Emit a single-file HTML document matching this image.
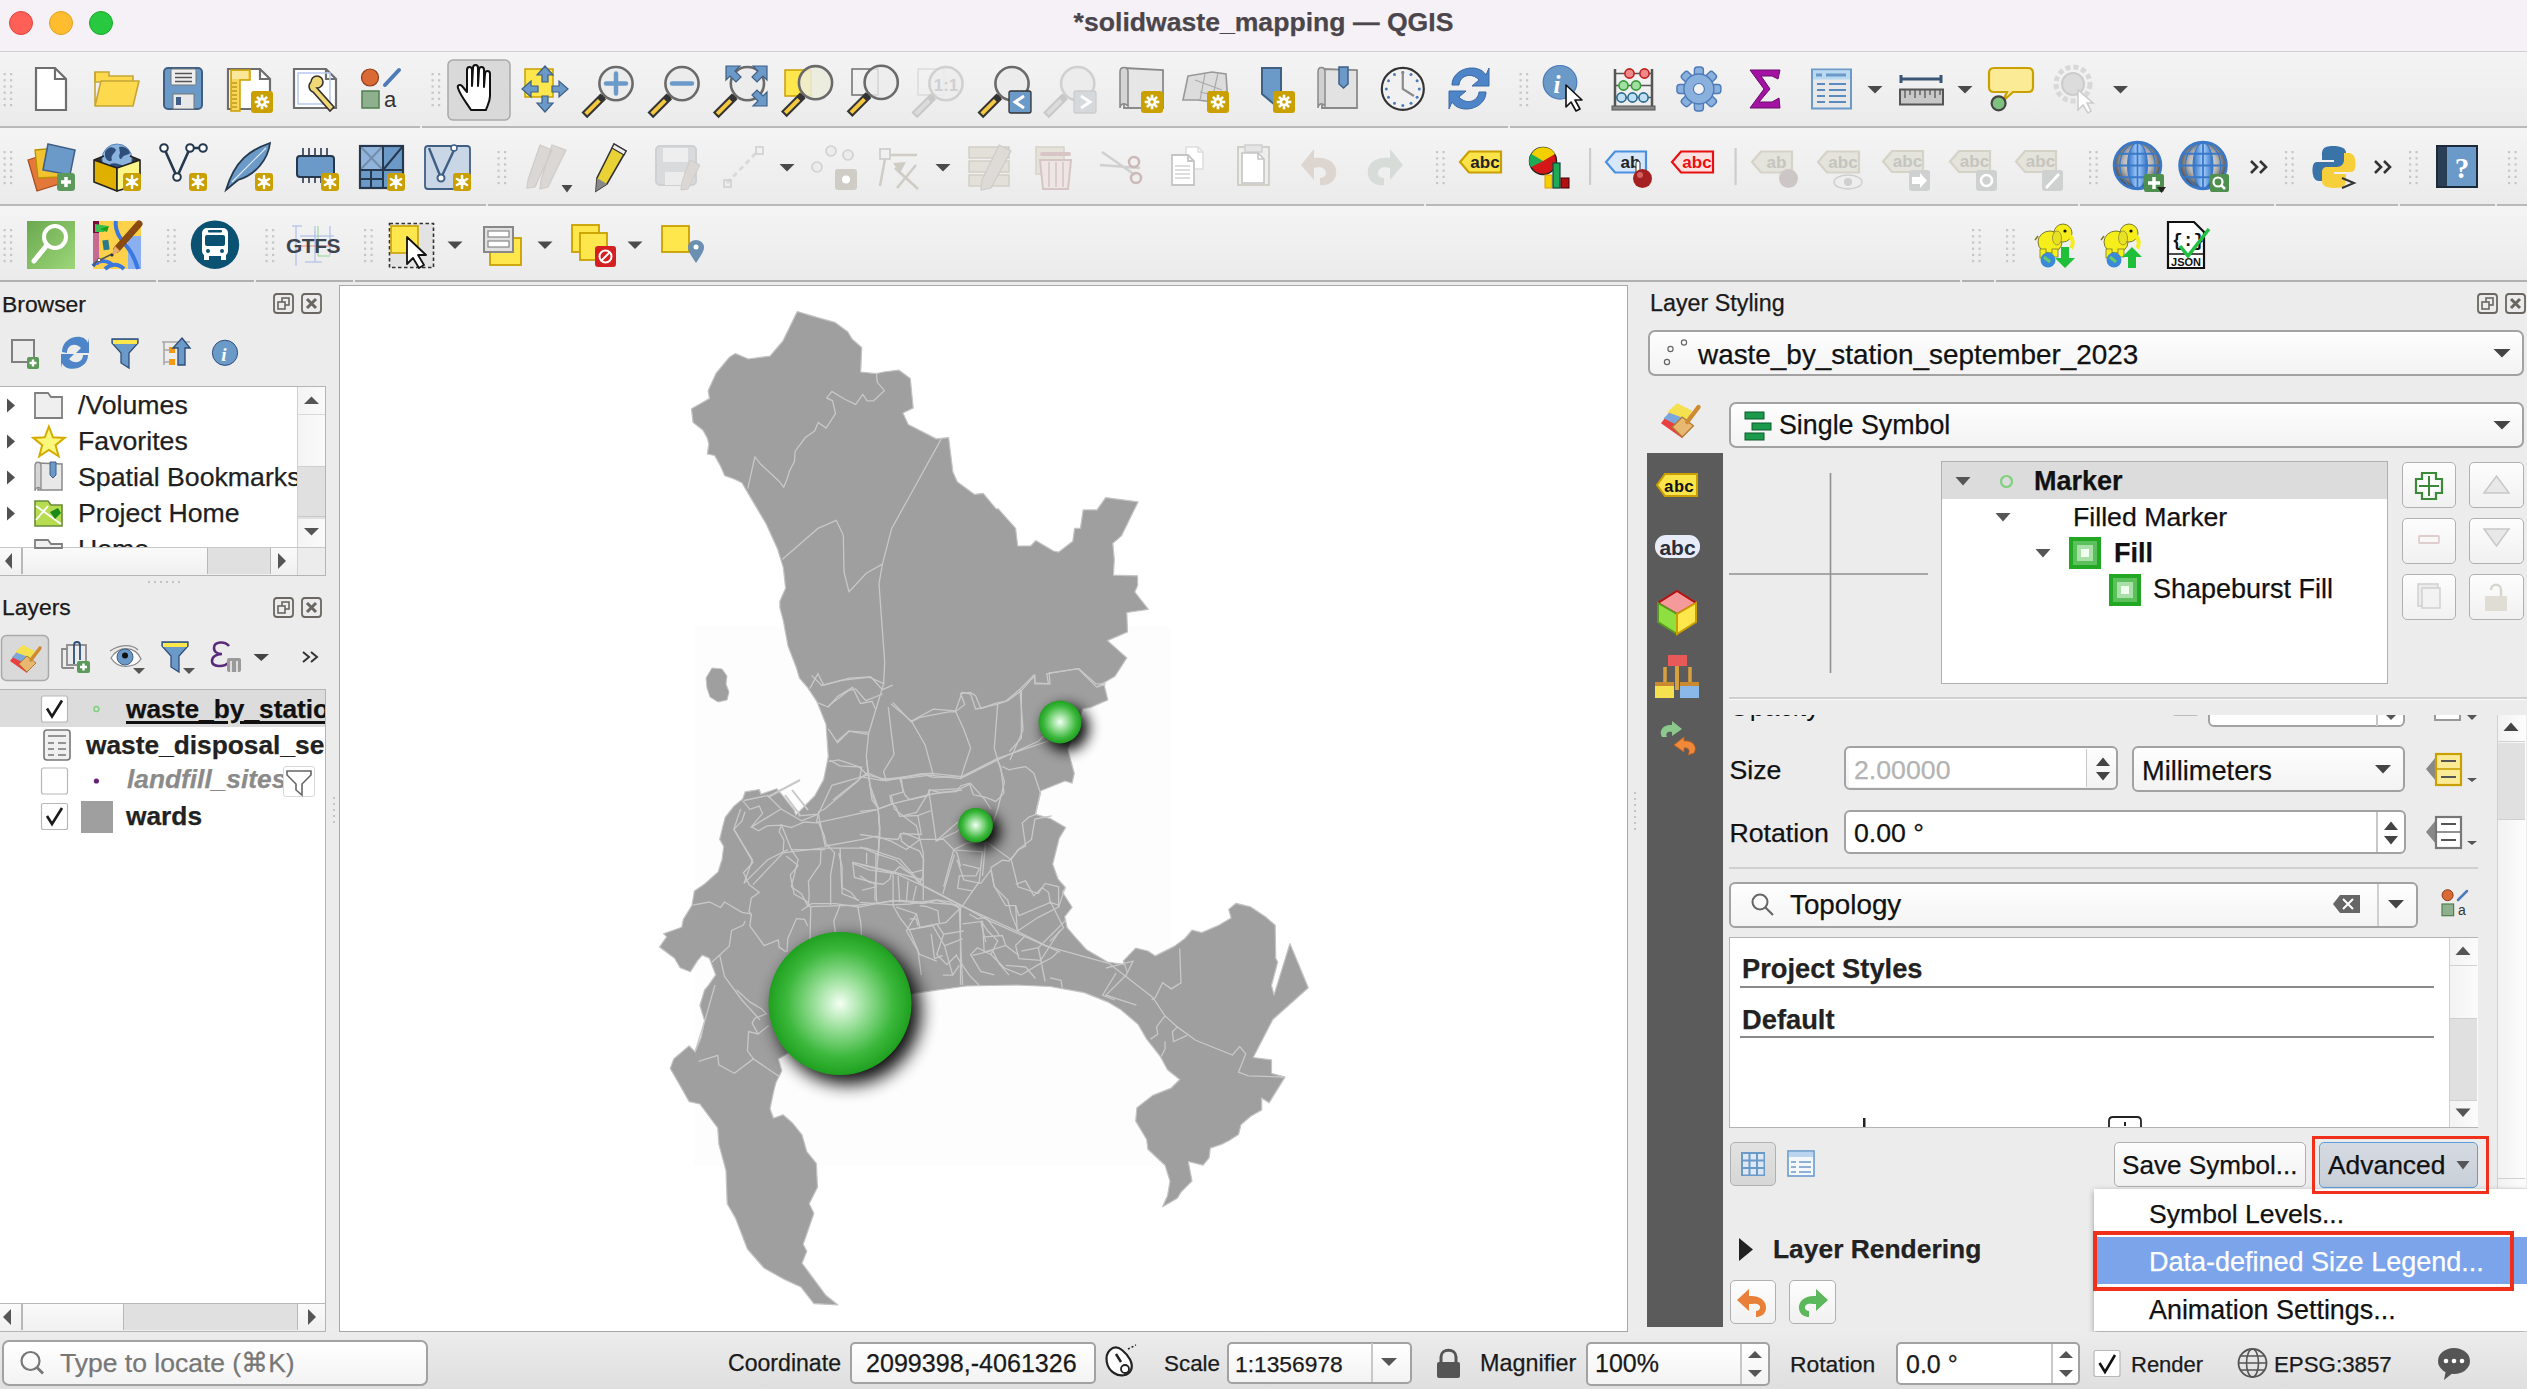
<!DOCTYPE html><html><head><meta charset="utf-8"><style>
html,body{margin:0;padding:0}
body{width:2527px;height:1389px;overflow:hidden;position:relative;background:#ececec;font-family:"Liberation Sans",sans-serif;color:#1a1a1a}
.a{position:absolute}
.t{white-space:nowrap;line-height:1;-webkit-text-stroke:0.25px currentColor}
.b{font-weight:bold}
</style></head><body>
<div class="a" style="left:0px;top:0px;width:2527px;height:51px;background:#f6f1f6"></div><div class="a" style="left:0px;top:51px;width:2527px;height:1px;background:#d3d0d3"></div><div class="a" style="left:9px;top:11px;width:24px;height:24px;background:#fe5f57;border-radius:50%;box-sizing:border-box;border:1px solid #e0443e"></div><div class="a" style="left:49px;top:11px;width:24px;height:24px;background:#febc2e;border-radius:50%;box-sizing:border-box;border:1px solid #dea123"></div><div class="a" style="left:89px;top:11px;width:24px;height:24px;background:#28c840;border-radius:50%;box-sizing:border-box;border:1px solid #1aab29"></div><div class="a t b" style="left:0;width:2527px;text-align:center;top:8.5px;font-size:26.6px;color:#4b464b;padding-left:-0px">*solidwaste_mapping — QGIS</div><div class="a" style="left:0px;top:52px;width:2527px;height:74px;background:linear-gradient(#f4f4f4,#ebebeb)"></div><div class="a" style="left:0px;top:126px;width:2527px;height:2px;background:#b9b9b9"></div><div class="a" style="left:0px;top:128px;width:2527px;height:76px;background:linear-gradient(#f4f4f4,#ebebeb)"></div><div class="a" style="left:0px;top:204px;width:2527px;height:2px;background:#b9b9b9"></div><div class="a" style="left:0px;top:206px;width:2527px;height:74px;background:linear-gradient(#f4f4f4,#ebebeb)"></div><div class="a" style="left:0px;top:280px;width:2527px;height:2px;background:#b0b0b0"></div><div class="a" style="left:420px;top:126px;width:2px;height:2px;background:#ececec"></div><div class="a" style="left:1508px;top:126px;width:2px;height:2px;background:#ececec"></div><div class="a" style="left:486px;top:204px;width:2px;height:2px;background:#ececec"></div><div class="a" style="left:1424px;top:204px;width:2px;height:2px;background:#ececec"></div><div class="a" style="left:2078px;top:204px;width:2px;height:2px;background:#ececec"></div><div class="a" style="left:2274px;top:204px;width:2px;height:2px;background:#ececec"></div><div class="a" style="left:2398px;top:204px;width:2px;height:2px;background:#ececec"></div><div class="a" style="left:2495px;top:204px;width:2px;height:2px;background:#ececec"></div><div class="a" style="left:156px;top:280px;width:2px;height:2px;background:#ececec"></div><div class="a" style="left:254px;top:280px;width:2px;height:2px;background:#ececec"></div><div class="a" style="left:353px;top:280px;width:2px;height:2px;background:#ececec"></div><div class="a" style="left:1960px;top:280px;width:2px;height:2px;background:#ececec"></div><div class="a" style="left:1994px;top:280px;width:2px;height:2px;background:#ececec"></div><div class="a t " style="left:2px;top:292.8px;font-size:22.9px;">Browser</div><div class="a t " style="left:2px;top:596.3px;font-size:22.9px;">Layers</div><div class="a" style="left:0px;top:386px;width:326px;height:190px;background:#fff;box-sizing:border-box;border:1px solid #b4b4b4;border-left:none"></div><div class="a" style="left:0;top:387px;width:297px;height:160px;overflow:hidden"><div class="a t" style="left:78px;top:5.0px;font-size:26.7px;color:#1f1f1f">/Volumes</div><div class="a t" style="left:78px;top:41.0px;font-size:26.7px;color:#1f1f1f">Favorites</div><div class="a t" style="left:78px;top:77.0px;font-size:26.7px;color:#1f1f1f">Spatial Bookmarks</div><div class="a t" style="left:78px;top:113.0px;font-size:26.7px;color:#1f1f1f">Project Home</div><div class="a t" style="left:78px;top:149.0px;font-size:26.7px;color:#1f1f1f">Home</div></div><div class="a" style="left:297px;top:387px;width:28px;height:160px;background:linear-gradient(90deg,#f4f4f4,#fafafa);border-left:1px solid #d0d0d0"></div><div class="a" style="left:298px;top:414px;width:27px;height:1px;background:#d8d8d8"></div><div class="a" style="left:298px;top:517px;width:27px;height:1px;background:#d8d8d8"></div><div class="a" style="left:298px;top:466px;width:27px;height:52px;background:#e0e0e0;border-top:1px solid #cfcfcf"></div><div class="a" style="left:298px;top:516px;width:27px;height:1px;background:#c8c8c8"></div><div class="a" style="left:0px;top:547px;width:297px;height:27px;background:linear-gradient(#fafafa,#f0f0f0);border-top:1px solid #c8c8c8"></div><div class="a" style="left:21px;top:548px;width:1.5px;height:26px;background:#b8b8b8"></div><div class="a" style="left:207px;top:548px;width:62px;height:26px;background:#e0e0e0;border-left:1.5px solid #b8b8b8;border-right:1.5px solid #b8b8b8"></div><div class="a" style="left:297px;top:547px;width:28px;height:27px;background:#ececec;border-left:1px solid #d0d0d0;border-top:1px solid #c8c8c8"></div><div class="a" style="left:0px;top:689px;width:326px;height:643px;background:#fff;box-sizing:border-box;border:1px solid #b4b4b4;border-left:none"></div><div class="a" style="left:0px;top:690px;width:325px;height:37px;background:#dcdcdc"></div><div class="a" style="left:0;top:690px;width:325px;height:150px;overflow:hidden"><div class="a t b" style="left:126px;top:6.0px;font-size:26.3px;color:#111;text-decoration:underline;text-decoration-thickness:3px;text-underline-offset:3px">waste_by_station_september_2023</div><div class="a t b" style="left:86px;top:41.7px;font-size:26.3px;color:#222">waste_disposal_september_2023</div><div class="a t b" style="left:127px;top:76.3px;font-size:26.3px;color:#8a8a8a;font-style:italic">landfill_sites</div><div class="a t b" style="left:126px;top:113.1px;font-size:26.3px;color:#222">wards</div></div><div class="a" style="left:283px;top:766px;width:32px;height:31px;background:#fff;border:1px solid #d8d8d8;border-radius:3px;box-sizing:border-box"></div><div class="a" style="left:0px;top:1303px;width:325px;height:27px;background:linear-gradient(#fafafa,#f0f0f0);border-top:1.5px solid #b8b8b8"></div><div class="a" style="left:21px;top:1304px;width:1.5px;height:26px;background:#b8b8b8"></div><div class="a" style="left:123px;top:1304px;width:173px;height:26px;background:#e0e0e0;border-left:1.5px solid #b8b8b8;border-right:1.5px solid #b8b8b8"></div><svg class="a" style="left:0;top:0" width="2527" height="1389" viewBox="0 0 2527 1389"><rect x="274" y="294" width="19" height="19" rx="3" fill="none" stroke="#6a6762" stroke-width="1.8"/><rect x="282" y="298" width="7" height="7" fill="none" stroke="#6a6762" stroke-width="1.6"/><rect x="278" y="302" width="7" height="7" fill="#ececec" stroke="#6a6762" stroke-width="1.6"/><rect x="302" y="294" width="19" height="19" rx="3" fill="none" stroke="#6a6762" stroke-width="1.8"/><path d="M307,299 L316,308 M316,299 L307,308" stroke="#6a6762" stroke-width="3"/><rect x="274" y="598" width="19" height="19" rx="3" fill="none" stroke="#6a6762" stroke-width="1.8"/><rect x="282" y="602" width="7" height="7" fill="none" stroke="#6a6762" stroke-width="1.6"/><rect x="278" y="606" width="7" height="7" fill="#ececec" stroke="#6a6762" stroke-width="1.6"/><rect x="302" y="598" width="19" height="19" rx="3" fill="none" stroke="#6a6762" stroke-width="1.8"/><path d="M307,603 L316,612 M316,603 L307,612" stroke="#6a6762" stroke-width="3"/><rect x="2478" y="294" width="19" height="19" rx="3" fill="none" stroke="#6a6762" stroke-width="1.8"/><rect x="2486" y="298" width="7" height="7" fill="none" stroke="#6a6762" stroke-width="1.6"/><rect x="2482" y="302" width="7" height="7" fill="#ececec" stroke="#6a6762" stroke-width="1.6"/><rect x="2506" y="294" width="19" height="19" rx="3" fill="none" stroke="#6a6762" stroke-width="1.8"/><path d="M2511,299 L2520,308 M2520,299 L2511,308" stroke="#6a6762" stroke-width="3"/><rect x="12" y="340" width="22" height="22" fill="none" stroke="#7f7f7f" stroke-width="2"/><rect x="27" y="357" width="12" height="12" rx="2" fill="#5c9a5c"/><path d="M33,359.5 V366.5 M29.5,363 H36.5" stroke="#fff" stroke-width="2.4"/><path d="M62,352 C62,336 84,332 88,343 L89,338 L89,353 L76,353 L81,348 C75,342 67,345 67,353 Z" fill="#4d85c8"/><path d="M88,355 C88,370 66,373 62,363 L61,368 L61,354 L74,354 L69,359 C75,365 83,362 83,355 Z" fill="#4d85c8"/><path d="M112,339 H138 V343 L129,353 V368 L121,363 V353 L112,343 Z" fill="#6b9ac9" stroke="#2f4f7a" stroke-width="1.3"/><rect x="113" y="340" width="24" height="4" fill="#fde74c"/><path d="M162,342 H190 M164,342 V365 M164,350 H170 M164,362 H170" stroke="#a8a8a8" stroke-width="1.6" fill="none"/><rect x="169" y="347" width="6" height="6" fill="#f59a10"/><rect x="169" y="359" width="6" height="6" fill="#f59a10"/><path d="M182,338 L190,348 L185,348 L185,365 L178,365 L178,348 L173,348 Z" fill="#6b9ac9" stroke="#2f4f7a" stroke-width="1.4"/><circle cx="225" cy="352.8" r="12.6" fill="#6b9ac9" stroke="#2f4f7a" stroke-width="1"/><text x="224" y="361" font-size="19" font-weight="bold" font-style="italic" fill="#fff" text-anchor="middle" font-family="Liberation Serif">i</text><path d="M7,398.5 L15,405.5 L7,412.5 Z" fill="#505050"/><path d="M7,434.5 L15,441.5 L7,448.5 Z" fill="#505050"/><path d="M7,470.5 L15,477.5 L7,484.5 Z" fill="#505050"/><path d="M7,506.5 L15,513.5 L7,520.5 Z" fill="#505050"/><path d="M35,393 H48 L51,397 H62 V418 H35 Z" fill="#efefef" stroke="#7f7f7f" stroke-width="1.8"/><polygon points="48.9,426.5 53.0,437.3 64.6,437.9 55.6,445.2 58.6,456.3 48.9,450.0 39.2,456.3 42.2,445.2 33.2,437.9 44.8,437.3" fill="#fbf77a" stroke="#d4aa00" stroke-width="2"/><path d="M38,463 L62,464 L62,490 L38,490 Z" fill="#e8e8e8" stroke="#8a8a8a" stroke-width="1.5"/><path d="M35,466 C35,461 41,461 41,466 V489 C38,486 35,488 35,491 Z" fill="#d6d6d6" stroke="#8a8a8a" stroke-width="1.3"/><path d="M50,462 H56 V475 L53,478 L50,475 Z" fill="#6b9ac9" stroke="#3f5f85" stroke-width="1"/><path d="M35,501 H48 L51,505 H62 V526 H35 Z" fill="#b7dc50" stroke="#6a8a3a" stroke-width="1.6"/><path d="M36,506 L61,524 M36,520 L48,506" stroke="#fff" stroke-width="1.8"/><path d="M50,512 L58,508 L61,513 L55,519 Z" fill="#1a8a1a"/><path d="M35,540 H48 L51,544 H62 V548 H35 Z" fill="#efefef" stroke="#7f7f7f" stroke-width="1.8"/><path d="M304,404 L311.5,396.5 L319,404 Z" fill="#555"/><path d="M304,528 L311.5,535.5 L319,528 Z" fill="#555"/><path d="M12,553 L5,561 L12,569 Z" fill="#555"/><path d="M278,553 L286,561 L278,569 Z" fill="#555"/><rect x="148" y="581" width="2" height="2" fill="#c4c4c4"/><rect x="154" y="581" width="2" height="2" fill="#c4c4c4"/><rect x="160" y="581" width="2" height="2" fill="#c4c4c4"/><rect x="166" y="581" width="2" height="2" fill="#c4c4c4"/><rect x="172" y="581" width="2" height="2" fill="#c4c4c4"/><rect x="178" y="581" width="2" height="2" fill="#c4c4c4"/><rect x="1.5" y="635.5" width="47" height="45" rx="5" fill="#d9d9d9" stroke="#aaa" stroke-width="1.5"/><g transform="translate(10,648) scale(1.0)"><path d="M0,13 L10,0 L24,8 L17,25 Z" fill="#e84040"/><path d="M2,9 L12,0 L24,6 L18,17 Z" fill="#7ba7dc"/><path d="M5,4 L13,-3 L25,3 L21,10 Z" fill="#f5e050"/><path d="M9,16 L17,8 L26,15 L17,24 Z" fill="#e8b870" stroke="#b07a30" stroke-width="1"/><line x1="21" y1="12" x2="30" y2="0" stroke="#d08a30" stroke-width="3.5" stroke-linecap="round"/></g><path d="M62,668 V649 H68 M62,668 H74" fill="none" stroke="#8a8a8a" stroke-width="1.8"/><rect x="67" y="645" width="19" height="20" fill="none" stroke="#8a8a8a" stroke-width="1.8"/><path d="M74,664 V645 C74,641 80,641 80,645 V660" fill="none" stroke="#2f4f7a" stroke-width="1.8"/><rect x="77" y="661" width="13" height="12" rx="2" fill="#5c9a5c"/><path d="M83.5,663.5 V670.5 M80,667 H87" stroke="#fff" stroke-width="2.4"/><path d="M111,658 C118,646 135,645 141,659 C135,668 118,670 111,658 Z" fill="#fff" stroke="#8a8a8a" stroke-width="1.3"/><circle cx="125" cy="657" r="8" fill="#6b9ac9" stroke="#3f5f85" stroke-width="1"/><circle cx="125" cy="655.5" r="3" fill="#111"/><path d="M110,651 C120,644 132,644 138,650" fill="none" stroke="#8a8a8a" stroke-width="1.2"/><path d="M133,668 L145,668 L139,674 Z" fill="#555"/><path d="M162,642 H188 V646 L179,656 V672 L171,667 V656 L162,646 Z" fill="#6b9ac9" stroke="#2f4f7a" stroke-width="1.3"/><rect x="163" y="643" width="24" height="4" fill="#fde74c"/><path d="M183,668 L195,668 L189,674 Z" fill="#555"/><path d="M229,646 C225,641 214,641 214,648 C214,652 218,654 222,654 C216,654 212,657 212,661 C212,667 224,668 229,662" fill="none" stroke="#5a2a7a" stroke-width="2.6"/><rect x="227" y="658" width="14" height="14" rx="2" fill="#9a9a9a"/><path d="M231,661 V672 M237,661 V672" stroke="#ddd" stroke-width="2"/><path d="M253.5,654 L269,654 L261.3,661 Z" fill="#444"/><path d="M303,652 L309,657 L303,662 M311,652 L317,657 L311,662" fill="none" stroke="#333" stroke-width="2"/><rect x="41.5" y="696.0" width="26" height="26" rx="2" fill="#fff" stroke="#b8b8b8" stroke-width="1.2"/><path d="M47,708.5 L52,716.5 L62,700.5" fill="none" stroke="#1a1a1a" stroke-width="2.6"/><rect x="41.5" y="768.0" width="26" height="26" rx="2" fill="#fff" stroke="#b8b8b8" stroke-width="1.2"/><rect x="41.5" y="803.5" width="26" height="26" rx="2" fill="#fff" stroke="#b8b8b8" stroke-width="1.2"/><path d="M47,816 L52,824 L62,808" fill="none" stroke="#1a1a1a" stroke-width="2.6"/><circle cx="96.4" cy="709" r="2.5" fill="none" stroke="#7fd07f" stroke-width="1.4"/><rect x="44" y="730" width="26" height="30" rx="3" fill="#f0f0f0" stroke="#777" stroke-width="1.6"/><path d="M48,736 H66 M48,743 H54 M58,743 H66 M48,749 H54 M58,749 H66 M48,755 H54 M58,755 H66" stroke="#777" stroke-width="1.4"/><circle cx="96.4" cy="781" r="2.6" fill="#6a1f7a"/><rect x="81" y="801" width="32" height="32" fill="#9f9f9f"/><path d="M287,771 H311 V775 L302,784 V795 L296,790 V784 L287,775 Z" fill="#fff" stroke="#666" stroke-width="1.6"/><rect x="333" y="797" width="2" height="2" fill="#c4c4c4"/><rect x="333" y="803" width="2" height="2" fill="#c4c4c4"/><rect x="333" y="809" width="2" height="2" fill="#c4c4c4"/><rect x="333" y="815" width="2" height="2" fill="#c4c4c4"/><rect x="333" y="821" width="2" height="2" fill="#c4c4c4"/><path d="M11,1309 L3,1317 L11,1325 Z" fill="#555"/><path d="M308,1309 L316,1317 L308,1325 Z" fill="#555"/></svg><div class="a" style="left:325px;top:386px;width:1px;height:190px;background:#b4b4b4"></div><div class="a" style="left:339px;top:285px;width:1289px;height:1047px;background:#fff;box-sizing:border-box;border:1px solid #a8a8a8"></div><svg class="a" style="left:0;top:0" width="2527" height="1389" viewBox="0 0 2527 1389"><g clip-path="url(#mc)"><clipPath id="mc"><rect x="340" y="286" width="1287" height="1045"/></clipPath><rect x="694" y="626" width="477" height="539" fill="#fdfdfd"/><polygon points="797.3,311.5 816.8,317.3 834.8,322.3 847.7,331.7 852.0,338.9 861.7,347.5 860.7,372.0 876.5,373.7 883.7,372.0 898.8,370.1 910.3,378.5 913.2,408.0 902.9,413.0 908.2,424.5 936.3,438.9 948.6,437.6 952.9,472.1 957.2,481.8 974.5,494.4 983.2,493.3 996.1,508.9 998.3,508.9 1015.6,528.3 1017.7,546.0 1030.7,546.0 1035.7,540.6 1053.4,551.0 1058.8,552.1 1072.8,541.3 1074.6,528.3 1080.4,528.3 1083.2,509.9 1097.0,509.9 1105.7,497.6 1138.1,501.9 1121.4,535.9 1112.8,543.4 1114.3,559.6 1113.4,575.2 1137.6,575.8 1137.6,585.5 1134.8,592.0 1148.4,609.3 1126.8,612.5 1127.5,632.0 1107.4,640.6 1126.8,657.9 1115.0,676.3 1096.6,687.1 1104.2,684.9 1107.8,700.0 1090.1,707.6
1082.9,708.6 1067.8,749.7 1074.3,773.4 1072.1,783.1 1065,781 1040.8,790.7 1035.4,814.4 1050.6,818.7 1065.7,827.4 1059.2,838.2 1052.7,864.1 1058.1,879.2 1065.7,887.8 1062.4,892.1 1072.1,907.3 1064.7,916.7 1067.1,927.7 1074.5,936.3 1086.7,949.8 1107.5,962 1124.7,964.5 1127.1,971.8 1123.4,960.8 1135.7,948.1 1147.9,951 1155.3,955.9 1174.8,946.1 1184.6,938.8 1192,930.2 1201.8,932.6 1218.9,925.3 1231.1,917.9 1228.7,909.4 1236,903.3 1250.7,906.9 1265.4,916.7 1275.2,925.3 1275.7,958.3 1277.7,962 1271.5,985.3 1274,995.1 1289.9,943.6 1308.3,987.7 1272.8,1019.5 1253.2,1057.5 1271.5,1059.9 1271.5,1073.4 1285,1077.1 1269.1,1102.8 1261.7,1097.9 1261.7,1110.1 1250.7,1116.2 1240.9,1124.8 1238.5,1134.6 1228.7,1140.7 1221.4,1144.4 1210.3,1148.1 1209.1,1157.8 1203,1165.2 1188.3,1161.5 1192,1181.1 1181,1192.1 1177.3,1198.2 1162.6,1206.8 1167.5,1195.8 1170,1181.1 1165,1165.2 1147.9,1149.3 1146.7,1139.5 1135.7,1121.1 1136.9,1107.7 1152.8,1095.4 1171.2,1088.1 1179.7,1079.5 1167.5,1069.7 1160.2,1056.3 1146.7,1039.1 1138.1,1024.4 1121,1009.7 1108.8,1002.4 1084.3,992.6 1050,986.5 1016,985 966.4,986 912.4,993.6 895,1000 870,1010 840,1025 810,1040 785,1055 778.3,1058.9
781.9,1070.8 775.9,1082.7 773.5,1092.2 770,1108.8 773.5,1118.3 783,1114.7 792.5,1123 802,1134.9 806.8,1151.6 816.3,1163.4 817.5,1187.2 809.2,1203.8 813.9,1213.3 803.2,1244.2 806.8,1251.3 802,1263.2 825.8,1295.3 837.7,1304.8 813.9,1303.6 800.9,1287 785.4,1279.9 764,1268 747.4,1249 735.5,1218.1 727.2,1203.8 726,1170.6 718.9,1144.4 717.7,1127.8 699.9,1104 689.2,1101.7 678.5,1082.7 670.2,1068.4 673.8,1058.9 689.2,1045.8 695.1,1051.8 701.1,1037.5 704.6,1020.9 699.9,1005.4 704.6,990
708.6,985.2 715.7,974.9 709.4,958.2 702.3,955.1 697.5,960.6 690.4,971.7 680.1,967.7 674.6,958.2 659.5,947.1 666.6,936.8 663.5,933.7 681.7,927.3 683.3,919.4 692,905.2 694.4,890.9 703.9,884.6 718.1,871.9 722.1,859.2 723.7,846.5 719.7,839.4 722.9,825.9 725.3,817.2 734,806.1 742.7,799 745.1,791.9 759.3,789.5 760.9,794.3 776.7,788.7 782.3,795.1 794.2,810.1 795.8,815.2 806.8,803.8 814.8,795.8 823.7,779.6 828.3,756.6 826.0,724.3 816.8,701.3 807.5,687.4 799.5,678.2 796.0,666.7 788.0,645.9 783.3,620.6 779.9,607.9 779.9,601.0 785.6,588.3 783.3,567.6 777.6,549.1 766.1,523.8 751.1,498.4 741.9,482.8 734.7,479.2 724.6,475.6 720.3,465.6 714.6,455.5 707.4,454.0 708.8,444.0 707.4,438.2 703.0,430.3 693.0,422.4 691.5,408.7 709.5,398.6 708.1,390.7 716.0,373.4 729.7,356.9 735.4,353.6 748.4,359.0 770.0,356.1 782.9,341.0" fill="#9f9f9f" stroke="#c4c4c4" stroke-width="1.2" stroke-linejoin="round"/><polygon points="712,668 722,669 727,676 726,684 729,692 727,700 718,702 710,697 707,688 706,678" fill="#9f9f9f" stroke="#c4c4c4" stroke-width="1"/><polyline points="811.6,675.4 821.8,685.5 842.1,680.4 869.1,677.1 884.4,683.8" fill="none" stroke="#c8c8c8" stroke-width="1.3"/><polyline points="828.6,705.8 848.8,690.6 855.6,688.9 865.8,700.7 882.7,694.0" fill="none" stroke="#c8c8c8" stroke-width="1.3"/><polyline points="837.0,741.3 848.8,731.2 869.1,734.6" fill="none" stroke="#c8c8c8" stroke-width="1.3"/><polyline points="828.6,761.6 838.7,759.9 859.0,766.7 867.5,775.2" fill="none" stroke="#c8c8c8" stroke-width="1.3"/><polyline points="798.1,815.8 818.4,814.1 831.9,785.3 867.5,775.2 882.7,778.6 903.0,778.6 930.0,775.2 960.5,778.6 997.7,759.9 1038.3,741.3 1058.6,722.7" fill="none" stroke="#c8c8c8" stroke-width="1.3"/><polyline points="891.1,704.1 911.4,721.0 933.4,709.2 955.4,710.9 962.2,692.3 970.6,694.0 975.7,709.2 997.7,704.1 1007.8,700.7 1021.4,690.6 1034.9,675.4 1034.9,683.8 1048.4,683.8 1046.8,673.7 1078.9,668.6 1095.8,683.8 1106.0,683.8" fill="none" stroke="#c8c8c8" stroke-width="1.3"/><polyline points="911.4,721.0 925.0,744.7 933.4,775.2" fill="none" stroke="#c8c8c8" stroke-width="1.3"/><polyline points="955.4,710.9 963.9,729.5 970.6,748.1 960.5,778.6" fill="none" stroke="#c8c8c8" stroke-width="1.3"/><polyline points="997.7,704.1 994.3,748.1 997.7,759.9" fill="none" stroke="#c8c8c8" stroke-width="1.3"/><polyline points="1021.4,690.6 1021.4,738.0 1009.5,751.5" fill="none" stroke="#c8c8c8" stroke-width="1.3"/><polyline points="997.7,759.9 1004.5,781.9 997.7,809.0 990.9,829.3" fill="none" stroke="#c8c8c8" stroke-width="1.3"/><polyline points="901.3,778.6 903.0,792.1 891.1,795.5 894.5,809.0 903.0,815.8 916.5,812.4 930.0,790.4 960.5,788.7 970.6,783.6 984.2,798.8 990.9,809.0" fill="none" stroke="#c8c8c8" stroke-width="1.3"/><polyline points="818.4,814.1 825.2,846.2 862.4,839.4 875.9,836.1 891.1,841.1 906.4,849.6 919.9,839.4" fill="none" stroke="#c8c8c8" stroke-width="1.3"/><polyline points="744.0,800.5 767.7,795.5 781.2,809.0 801.5,820.8 818.4,814.1" fill="none" stroke="#c8c8c8" stroke-width="1.3"/><polyline points="750.7,827.6 764.3,819.1 781.2,809.0" fill="none" stroke="#c8c8c8" stroke-width="1.3"/><polyline points="781.2,824.2 791.3,849.6 825.2,849.6" fill="none" stroke="#c8c8c8" stroke-width="1.3"/><polyline points="903.0,815.8 916.5,825.9 923.3,853.0 923.3,900.3" fill="none" stroke="#c8c8c8" stroke-width="1.3"/><polyline points="852.2,863.1 869.1,869.9 892.8,873.3 899.6,866.5 909.7,873.3 923.3,869.9" fill="none" stroke="#c8c8c8" stroke-width="1.3"/><polyline points="903.0,832.7 919.9,839.4 943.6,839.4 957.1,853.0 960.5,866.5" fill="none" stroke="#c8c8c8" stroke-width="1.3"/><polyline points="744.0,883.4 767.7,859.7 788.0,849.6" fill="none" stroke="#c8c8c8" stroke-width="1.3"/><polyline points="744.0,883.4 752.4,859.7 733.8,829.3 740.6,809.0" fill="none" stroke="#c8c8c8" stroke-width="1.3"/><polyline points="791.3,849.6 798.1,859.7 791.3,886.8 801.5,893.6 808.3,907.1" fill="none" stroke="#c8c8c8" stroke-width="1.3"/><polyline points="801.5,910.5 811.6,903.7 835.3,903.7 859.0,907.1 892.8,900.3 923.3,903.7 936.8,900.3 960.5,907.1" fill="none" stroke="#c8c8c8" stroke-width="1.3"/><polyline points="838.7,853.0 842.1,866.5 842.1,893.6 859.0,900.3" fill="none" stroke="#c8c8c8" stroke-width="1.3"/><polyline points="875.9,853.0 875.9,886.8 862.4,890.2" fill="none" stroke="#c8c8c8" stroke-width="1.3"/><polyline points="943.6,886.8 953.7,849.6 967.3,842.8 987.6,842.8 1011.2,859.7 1018.0,849.6 1031.5,839.4 1034.9,819.1 1051.8,815.8" fill="none" stroke="#c8c8c8" stroke-width="1.3"/><polyline points="957.1,859.7 963.9,880.0 980.8,883.4 990.9,869.9" fill="none" stroke="#c8c8c8" stroke-width="1.3"/><polyline points="990.9,869.9 994.3,886.8 1007.8,900.3 1011.2,913.9 1018.0,930.8" fill="none" stroke="#c8c8c8" stroke-width="1.3"/><polyline points="1011.2,859.7 1018.0,886.8 1038.3,893.6 1045.1,883.4 1058.6,886.8 1058.6,907.1" fill="none" stroke="#c8c8c8" stroke-width="1.3"/><polyline points="1018.0,930.8 1038.3,917.3 1058.6,907.1 1065.4,886.8" fill="none" stroke="#c8c8c8" stroke-width="1.3"/><polyline points="960.5,907.1 960.5,984.9" fill="none" stroke="#c8c8c8" stroke-width="1.3"/><polyline points="896.2,907.1 916.5,913.9 919.9,927.4 936.8,924.0 943.6,934.2 963.9,930.8" fill="none" stroke="#c8c8c8" stroke-width="1.3"/><polyline points="916.5,913.9 906.4,930.8 919.9,954.5 936.8,961.2" fill="none" stroke="#c8c8c8" stroke-width="1.3"/><polyline points="943.6,934.2 936.8,954.5 947.0,964.6 957.1,954.5" fill="none" stroke="#c8c8c8" stroke-width="1.3"/><polyline points="980.8,920.6 987.6,930.8 997.7,940.9 990.9,954.5 1004.5,968.0 1021.4,974.8" fill="none" stroke="#c8c8c8" stroke-width="1.3"/><polyline points="990.9,954.5 977.4,947.7 970.6,954.5 980.8,971.4 994.3,974.8" fill="none" stroke="#c8c8c8" stroke-width="1.3"/><polyline points="1021.4,951.1 1038.3,947.7 1051.8,934.2 1065.4,920.6" fill="none" stroke="#c8c8c8" stroke-width="1.3"/><polyline points="1038.3,947.7 1045.1,981.5" fill="none" stroke="#c8c8c8" stroke-width="1.3"/><polyline points="1106.0,968.0 1133.0,961.2 1126.3,974.8 1106.0,995.1 1136.4,1005.2" fill="none" stroke="#c8c8c8" stroke-width="1.3"/><polyline points="1021.4,974.8 1038.3,964.6 1051.8,957.8 1058.6,951.1" fill="none" stroke="#c8c8c8" stroke-width="1.3"/><polyline points="860.0,846.9 878.2,854.4 896.4,860.2 909.7,872.6 919.6,883.3" fill="none" stroke="#c8c8c8" stroke-width="1.3"/><polyline points="860.0,864.3 897.3,874.2 922.9,885.8 961.0,905.7 1015.6,930.5 1045.4,945.4 1060.0,952.1" fill="none" stroke="#c8c8c8" stroke-width="1.3"/><polyline points="997.4,760.0 964.3,775.7 962.6,776.6 932.8,777.4 922.9,774.1 899.7,778.2 883.2,780.7 860.0,776.6" fill="none" stroke="#c8c8c8" stroke-width="1.3"/><polyline points="866.6,760.0 868.3,774.9 869.9,784.8 878.2,808.0 879.9,834.5 878.2,854.4 875.7,879.2 876.6,902.4" fill="none" stroke="#c8c8c8" stroke-width="1.3"/><polyline points="899.7,778.2 904.7,794.8 909.7,799.7 927.9,795.6 929.5,789.8 939.5,792.3 956.0,791.5 961.0,785.7 969.3,783.2 973.4,794.8 985.8,797.3 995.8,801.4 1004.0,793.1 1000.7,766.6 997.4,760.0" fill="none" stroke="#c8c8c8" stroke-width="1.3"/><polyline points="889.8,794.8 891.5,803.9 895.6,806.4 899.7,816.3 917.9,815.5 931.2,810.5" fill="none" stroke="#c8c8c8" stroke-width="1.3"/><polyline points="917.9,815.5 921.3,834.5 900.6,833.7 901.4,841.1 908.0,846.1 919.6,851.1 923.7,859.3 922.9,875.9 919.6,883.3" fill="none" stroke="#c8c8c8" stroke-width="1.3"/><polyline points="928.7,789.8 936.2,841.1 956.0,832.0 959.3,829.5" fill="none" stroke="#c8c8c8" stroke-width="1.3"/><polyline points="936.2,841.1 957.7,822.1" fill="none" stroke="#c8c8c8" stroke-width="1.3"/><polyline points="956.0,850.2 982.5,851.9 979.2,881.7 962.6,905.7 946.1,922.3 909.7,929.7" fill="none" stroke="#c8c8c8" stroke-width="1.3"/><polyline points="954.4,854.4 942.8,894.1" fill="none" stroke="#c8c8c8" stroke-width="1.3"/><polyline points="962.6,864.3 979.2,868.4 975.9,875.9 959.3,875.9 957.7,888.3 972.6,890.8" fill="none" stroke="#c8c8c8" stroke-width="1.3"/><polyline points="985.8,840.3 982.5,875.9" fill="none" stroke="#c8c8c8" stroke-width="1.3"/><polyline points="990.8,867.6 1002.4,860.2 1009.0,861.0 1018.9,849.4 1025.6,846.1 1022.3,822.9 1028.9,817.1 1035.5,814.6 1040.5,793.1 1033.8,773.2 1025.6,766.6 1015.6,768.3 1009.0,769.9 1002.4,766.6" fill="none" stroke="#c8c8c8" stroke-width="1.3"/><polyline points="990.8,867.6 994.1,885.8 1005.7,905.7 1015.6,905.7 1017.3,930.5" fill="none" stroke="#c8c8c8" stroke-width="1.3"/><polyline points="1015.6,905.7 1018.9,915.6 1050.4,902.4 1060.0,905.7" fill="none" stroke="#c8c8c8" stroke-width="1.3"/><polyline points="1015.6,884.2 1025.6,880.9 1033.8,895.8 1042.1,887.5 1048.7,892.5 1050.4,904.0" fill="none" stroke="#c8c8c8" stroke-width="1.3"/><polyline points="860.0,902.4 893.1,904.9 909.7,904.0 936.2,899.9 949.4,901.6 959.3,908.2 961.0,952.1 962.6,985.2" fill="none" stroke="#c8c8c8" stroke-width="1.3"/><polyline points="893.1,874.2 893.1,905.7 899.7,917.3 909.7,930.5 917.9,950.4 921.3,975.2" fill="none" stroke="#c8c8c8" stroke-width="1.3"/><polyline points="909.7,929.7 932.8,925.6 944.4,945.4 952.7,975.2" fill="none" stroke="#c8c8c8" stroke-width="1.3"/><polyline points="931.2,933.8 934.5,958.7 942.8,955.4" fill="none" stroke="#c8c8c8" stroke-width="1.3"/><polyline points="962.6,923.9 982.5,921.4 984.2,952.1 1005.7,945.4 1018.9,955.4" fill="none" stroke="#c8c8c8" stroke-width="1.3"/><polyline points="982.5,937.2 1002.4,935.5 1005.7,945.4" fill="none" stroke="#c8c8c8" stroke-width="1.3"/><polyline points="945.3,945.4 962.6,938.8" fill="none" stroke="#c8c8c8" stroke-width="1.3"/><polyline points="956.0,955.4 969.3,975.2 979.2,985.2" fill="none" stroke="#c8c8c8" stroke-width="1.3"/><polyline points="972.6,955.4 992.5,950.4 999.1,963.6 1009.0,975.2" fill="none" stroke="#c8c8c8" stroke-width="1.3"/><polyline points="1025.6,935.5 1015.6,945.4 1018.9,958.7 1040.5,960.3 1060.0,930.5" fill="none" stroke="#c8c8c8" stroke-width="1.3"/><polyline points="860.0,875.9 869.9,882.5 883.2,884.2 889.8,879.2 891.5,872.6" fill="none" stroke="#c8c8c8" stroke-width="1.3"/><polyline points="866.6,852.7 866.6,864.3" fill="none" stroke="#c8c8c8" stroke-width="1.3"/><polyline points="898.1,875.9 899.7,902.4" fill="none" stroke="#c8c8c8" stroke-width="1.3"/><polyline points="908.0,880.9 906.4,902.4" fill="none" stroke="#c8c8c8" stroke-width="1.3"/><polyline points="916.3,885.8 913.0,900.7" fill="none" stroke="#c8c8c8" stroke-width="1.3"/><polyline points="909.7,918.9 916.3,918.9 917.9,925.6" fill="none" stroke="#c8c8c8" stroke-width="1.3"/><polyline points="919.6,905.7 926.2,906.5 937.8,910.7 939.5,923.9" fill="none" stroke="#c8c8c8" stroke-width="1.3"/><polyline points="969.3,914.0 977.5,918.9 985.8,917.3 997.4,932.2 999.1,935.5" fill="none" stroke="#c8c8c8" stroke-width="1.3"/><polyline points="980.9,922.3 985.8,942.1" fill="none" stroke="#c8c8c8" stroke-width="1.3"/><polyline points="860.0,834.5 871.6,836.2 878.2,837.8 898.1,839.5 900.6,833.7" fill="none" stroke="#c8c8c8" stroke-width="1.3"/><polyline points="860.0,811.3 876.6,809.7 889.8,804.7" fill="none" stroke="#c8c8c8" stroke-width="1.3"/><polyline points="942.8,975.2 952.7,975.2 959.3,965.3" fill="none" stroke="#c8c8c8" stroke-width="1.3"/><polyline points="1005.7,965.3 1025.6,967.0 1035.5,978.5" fill="none" stroke="#c8c8c8" stroke-width="1.3"/><polyline points="747.7,488.6 754.9,456.9 760.6,464.1 779.3,481.4 783.7,487.2 787.3,478.5 789.4,471.3 794.5,461.2 795.2,451.2 805.3,437.5 814.6,431.0 818.2,422.4 826.1,428.1 835.5,413.7 832.6,400.8 826.8,397.9 831.9,391.4 844.8,399.3 855.6,404.4 862.8,394.3 867.2,400.8 873.6,400.8 884.4,390.7 877.2,382.1 876.5,373.7" fill="none" stroke="#c8c8c8" stroke-width="1.3"/><polyline points="941.3,438.9 907.5,500 891.7,528.4 882.4,564.1 879,583.7 884.7,662.1 883.6,684 868.6,733.5 866.3,756.6 868.6,775 872,800 878,808 879.7,827.5 878.1,856" fill="none" stroke="#c8c8c8" stroke-width="1.3"/><polyline points="782.2,559.5 817.9,528.4 836.3,520.3 843.3,535.3 844,572.2 849,591.8 866.3,573.3 882.4,564.1" fill="none" stroke="#c8c8c8" stroke-width="1.3"/><polyline points="809.8,688.6 817.9,673.6 823.7,685.1 849,678.2 870.9,677 882.4,689.7 892.8,685.1" fill="none" stroke="#c8c8c8" stroke-width="1.3"/><polyline points="816.8,702.4 828.3,707 837.5,696.6 852.5,687.4 860.5,703.5 872,701.3 875.5,709.3" fill="none" stroke="#c8c8c8" stroke-width="1.3"/><polyline points="828.3,728.9 837.5,742.7 849,731.2 868.6,732.4" fill="none" stroke="#c8c8c8" stroke-width="1.3"/><polyline points="829.4,760 839.8,765.8 861.7,767 859.4,779.6" fill="none" stroke="#c8c8c8" stroke-width="1.3"/><polyline points="888.2,707 894,754.3 883.6,771.5 885.9,779.6" fill="none" stroke="#c8c8c8" stroke-width="1.3"/><polyline points="892.8,702.4 911.2,722 920,717.4 948.6,711.9 955.1,711.9 964.8,704.4 960.5,693.6 970.2,692.5 975.6,695.7 981,708.7 995.1,703.3 1005.9,701.1 1019.9,689.2 1033.9,675.2 1035,682.8 1050.1,683.8 1049.1,673 1078.2,668.7 1096.6,687.1" fill="none" stroke="#c8c8c8" stroke-width="1.3"/><polyline points="1019.9,689.2 1023.1,730 1010,760" fill="none" stroke="#c8c8c8" stroke-width="1.3"/><polyline points="832.9,800 867.5,772.7 885.9,780.8 920,773.8 931.8,773.4 962,776.6 997.7,758.3 1048.4,741" fill="none" stroke="#c8c8c8" stroke-width="1.3"/><polyline points="742.7,800.6 749.8,809.3 759.3,806.1 762.5,813.3 751.4,826.7 758.5,830.7 767.2,825.9 781.5,825.2 791,827.5 804.5,822 816.4,822.8 818.7,811.7 824.3,809.3 859.1,780" fill="none" stroke="#c8c8c8" stroke-width="1.3"/><polyline points="816.4,822.8 875,810.1 892.4,803.8 931.8,794 962,790" fill="none" stroke="#c8c8c8" stroke-width="1.3"/><polyline points="869.4,780 871,792.7 878.1,808.5 879.7,827.5 878.1,856" fill="none" stroke="#c8c8c8" stroke-width="1.3"/><polyline points="734,829.1 741.9,821.2 745,811.7" fill="none" stroke="#c8c8c8" stroke-width="1.3"/><polyline points="734,829.1 740.3,840.2 753,862.4 743.5,872.7 749,884.6 759.3,892.5 751.4,898 749,911.5 751.4,914.7 749.8,925.8 764.1,945.6 778.3,940 779.1,947.1 786.2,951.9" fill="none" stroke="#c8c8c8" stroke-width="1.3"/><polyline points="692.8,905.2 709.4,902 720.5,907.5 724.5,902 741.9,912.3 751.4,913.9" fill="none" stroke="#c8c8c8" stroke-width="1.3"/><polyline points="745,921 743.5,925 731.6,930.5 729.2,946.3 719.7,955.1 711.8,962.2" fill="none" stroke="#c8c8c8" stroke-width="1.3"/><polyline points="719.7,955.1 724.5,976.4 741.9,1000 760,1020" fill="none" stroke="#c8c8c8" stroke-width="1.3"/><polyline points="753,884.6 783.1,852.9 821.1,848.1 840.1,848.1 866.3,848.1 900,859.2 923.2,885.7 961,905.1 988,920.2 1046.2,946.1 1108.8,963.4" fill="none" stroke="#c8c8c8" stroke-width="1.3"/><polyline points="783.1,852.9 783.9,840.2 779.1,831.5 781.5,825.2" fill="none" stroke="#c8c8c8" stroke-width="1.3"/><polyline points="786.2,856 798.1,865.6 790.2,875.1 794.2,894.1 806.8,901.2 810,906.7 857.5,905.2 900.3,900.4 961,905.1" fill="none" stroke="#c8c8c8" stroke-width="1.3"/><polyline points="808.4,906.7 809.2,894.1 808.4,881.4 814.8,871.9 820.3,864 821.1,848.9" fill="none" stroke="#c8c8c8" stroke-width="1.3"/><polyline points="810.8,906.7 810,938.4 812,960" fill="none" stroke="#c8c8c8" stroke-width="1.3"/><polyline points="830.6,905.2 830.6,875.1 834.6,852.9 825.9,843.4 824.3,835.5 817.9,821.2" fill="none" stroke="#c8c8c8" stroke-width="1.3"/><polyline points="840.1,905.2 833.8,921 835.4,932.1" fill="none" stroke="#c8c8c8" stroke-width="1.3"/><polyline points="857.5,905.2 860.7,922.6 861.5,935.3" fill="none" stroke="#c8c8c8" stroke-width="1.3"/><polyline points="840.1,848.1 841.7,887.7 851.2,892.5 857.5,900.4" fill="none" stroke="#c8c8c8" stroke-width="1.3"/><polyline points="875,900.4 875,883 854.4,877.4 852.8,862.4 893.2,871.9 923,880" fill="none" stroke="#c8c8c8" stroke-width="1.3"/><polyline points="787,951.9 787.8,938.4 796.5,918.6 804.5,919.4 807.6,925.8" fill="none" stroke="#c8c8c8" stroke-width="1.3"/><polyline points="880,779.9 931.8,773.4" fill="none" stroke="#c8c8c8" stroke-width="1.3"/><polyline points="1108.8,963.2 1152.8,997.5 1165,1015.9 1177.3,1026.9 1195.7,1040.3 1232.4,1055 1239.7,1046.5 1245.8,1053.8 1238.5,1072.2 1248.3,1075.8 1285,1077.1" fill="none" stroke="#c8c8c8" stroke-width="1.3"/><polyline points="1116.1,973 1102.6,995.1 1114.9,1000" fill="none" stroke="#c8c8c8" stroke-width="1.3"/><polyline points="1179.7,948.5 1181,982.8 1171.2,988.9 1162.6,982.8 1155.3,997.5 1151.6,1000" fill="none" stroke="#c8c8c8" stroke-width="1.3"/><polyline points="1165,1015.9 1156.5,1026.9 1157.7,1034.2 1150.4,1039.1" fill="none" stroke="#c8c8c8" stroke-width="1.3"/><polyline points="1177.3,1026.9 1172.4,1031.8 1173.6,1041.6 1187.1,1035.4" fill="none" stroke="#c8c8c8" stroke-width="1.3"/><polyline points="1165,1041.6 1165,1048.9 1161.4,1056.3" fill="none" stroke="#c8c8c8" stroke-width="1.3"/><polyline points="1050,900.8 1063.5,927.7 1050,941.2" fill="none" stroke="#c8c8c8" stroke-width="1.3"/><polyline points="1050,977.9 1061,980.4 1062.2,987.7" fill="none" stroke="#c8c8c8" stroke-width="1.3"/><polyline points="698.7,1061.3 717.7,1055.3 718.9,1064.8 734.3,1073.2 753.4,1058.9 779.5,1076.7" fill="none" stroke="#c8c8c8" stroke-width="1.3"/><polyline points="753.4,1058.9 747.4,1050.6 748.6,1031.6 758.1,1034 768.8,1025.6" fill="none" stroke="#c8c8c8" stroke-width="1.3"/><polyline points="736.7,990 749.8,1001.9 761.7,1009 766.4,1013.8 754.5,1018.5 752.2,1023.3 758.1,1034" fill="none" stroke="#c8c8c8" stroke-width="1.3"/><polyline points="695,1052 705,1020 715,985" fill="none" stroke="#c8c8c8" stroke-width="1.3"/><path d="M768,797 L800,780 M785,795 L800,815 M792,790 L808,810" stroke="#c8c8c8" stroke-width="2" fill="none"/><defs>
<radialGradient id="gb" cx="50%" cy="50%" r="50%"><stop offset="0" stop-color="#f4fff4"/><stop offset="0.35" stop-color="#9be09b"/><stop offset="0.75" stop-color="#3cb83c"/><stop offset="1" stop-color="#1fa01f"/></radialGradient>
<filter id="sh" x="-60%" y="-60%" width="220%" height="220%"><feGaussianBlur stdDeviation="7"/></filter>
<filter id="sh2" x="-60%" y="-60%" width="220%" height="220%"><feGaussianBlur stdDeviation="3"/></filter>
</defs><filter id="f1060" x="-80%" y="-80%" width="260%" height="260%"><feGaussianBlur stdDeviation="7.0"/></filter><circle cx="1066.0" cy="728.0" r="23.0" fill="#000" opacity="0.95" filter="url(#f1060)"/><circle cx="1060" cy="722" r="21.5" fill="url(#gb)"/><filter id="f975" x="-80%" y="-80%" width="260%" height="260%"><feGaussianBlur stdDeviation="7.0"/></filter><circle cx="981.6" cy="831.2" r="18.8" fill="#000" opacity="0.95" filter="url(#f975)"/><circle cx="975.6" cy="825.2" r="17.3" fill="url(#gb)"/><filter id="f840" x="-80%" y="-80%" width="260%" height="260%"><feGaussianBlur stdDeviation="9.0"/></filter><circle cx="848.0" cy="1011.5" r="73.0" fill="#000" opacity="0.95" filter="url(#f840)"/><circle cx="840" cy="1003.5" r="71.5" fill="url(#gb)"/></g></svg><div class="a t " style="left:1650px;top:292.2px;font-size:23.3px;">Layer Styling</div><div class="a" style="left:1648px;top:330px;width:876px;height:46px;box-sizing:border-box;border:2px solid #a2a2a2;border-radius:7px;background:linear-gradient(#fefefe,#f3f3f3)"></div><div class="a t " style="left:1698px;top:340.6px;font-size:27.9px;color:#111">waste_by_station_september_2023</div><div class="a" style="left:1729px;top:402px;width:795px;height:46px;box-sizing:border-box;border:2px solid #a2a2a2;border-radius:7px;background:linear-gradient(#fefefe,#f3f3f3)"></div><div class="a t " style="left:1779px;top:411.7px;font-size:26.8px;color:#111">Single Symbol</div><div class="a" style="left:1647px;top:453px;width:76px;height:874px;background:#5b5b5b"></div><div class="a" style="left:1941px;top:461px;width:447px;height:223px;background:#fff;box-sizing:border-box;border:1.2px solid #b0b0b0"></div><div class="a" style="left:1942px;top:462px;width:445px;height:37px;background:#dcdcdc"></div><div class="a t b" style="left:2034px;top:467.7px;font-size:27px;color:#111">Marker</div><div class="a t " style="left:2073px;top:504.2px;font-size:26.7px;color:#111">Filled Marker</div><div class="a t b" style="left:2114px;top:539.7px;font-size:27px;color:#111">Fill</div><div class="a t " style="left:2153px;top:575.8px;font-size:27px;color:#111">Shapeburst Fill</div><div class="a" style="left:2402px;top:462px;width:54px;height:46px;box-sizing:border-box;border:1.5px solid #b0b0b0;border-radius:5px;background:linear-gradient(#fdfdfd,#f1f1f1)"></div><div class="a" style="left:2469px;top:462px;width:55px;height:46px;box-sizing:border-box;border:1.5px solid #b0b0b0;border-radius:5px;background:linear-gradient(#fdfdfd,#f1f1f1)"></div><div class="a" style="left:2402px;top:518px;width:54px;height:46px;box-sizing:border-box;border:1.5px solid #b0b0b0;border-radius:5px;background:linear-gradient(#fdfdfd,#f1f1f1)"></div><div class="a" style="left:2469px;top:518px;width:55px;height:46px;box-sizing:border-box;border:1.5px solid #b0b0b0;border-radius:5px;background:linear-gradient(#fdfdfd,#f1f1f1)"></div><div class="a" style="left:2402px;top:574px;width:54px;height:46px;box-sizing:border-box;border:1.5px solid #b0b0b0;border-radius:5px;background:linear-gradient(#fdfdfd,#f1f1f1)"></div><div class="a" style="left:2469px;top:574px;width:55px;height:46px;box-sizing:border-box;border:1.5px solid #b0b0b0;border-radius:5px;background:linear-gradient(#fdfdfd,#f1f1f1)"></div><div class="a" style="left:1729px;top:697px;width:798px;height:1.5px;background:#cfcfcf"></div><div class="a" style="left:1729px;top:699px;width:798px;height:1.2px;background:#fafafa"></div><div class="a" style="left:1724px;top:714.5px;width:770px;height:413px;overflow:hidden"><div class="a" style="left:484px;top:-44px;width:197px;height:56px;box-sizing:border-box;border:2px solid #a2a2a2;border-radius:6px;background:#fff"></div><div class="a" style="left:652px;top:-44px;width:1.5px;height:55px;background:#c8c8c8"></div><div class="a" style="left:449px;top:-3px;width:25px;height:4px;background:#bbb;border-radius:2px"></div><div class="a" style="left:5px;top:-20.6px;font-size:26.7px;line-height:1;color:#111">Opacity</div><div class="a" style="left:710px;top:-40px;width:27px;height:46px;border:2px solid #999;box-sizing:border-box;background:#fff"></div><div class="a" style="left:662px;top:0px;width:0;height:0;border-left:5px solid transparent;border-right:5px solid transparent;border-top:5px solid #555"></div><div class="a" style="left:743px;top:0px;width:0;height:0;border-left:5px solid transparent;border-right:5px solid transparent;border-top:5px solid #555"></div></div><div class="a t " style="left:1729.5px;top:756.9px;font-size:26.7px;color:#111">Size</div><div class="a" style="left:1844px;top:746px;width:274px;height:44px;box-sizing:border-box;border:2px solid #a2a2a2;border-radius:6px;background:linear-gradient(#fdfdfd,#f2f2f2)"></div><div class="a" style="left:1849px;top:749px;width:237px;height:38px;background:#fff;border-right:1.5px solid #c8c8c8"></div><div class="a t " style="left:1854px;top:756.9px;font-size:26.7px;color:#b3b3b3">2.00000</div><div class="a" style="left:2132px;top:746px;width:273px;height:46px;box-sizing:border-box;border:2px solid #a2a2a2;border-radius:6px;background:linear-gradient(#fefefe,#f3f3f3)"></div><div class="a t " style="left:2142px;top:756.5px;font-size:27.2px;color:#111">Millimeters</div><div class="a t " style="left:1729.5px;top:820.1px;font-size:26.7px;color:#111">Rotation</div><div class="a" style="left:1844px;top:810px;width:562px;height:44px;box-sizing:border-box;border:2px solid #a2a2a2;border-radius:6px;background:#fff"></div><div class="a" style="left:2376px;top:812px;width:1.5px;height:40px;background:#c8c8c8"></div><div class="a t " style="left:1854px;top:820.1px;font-size:26.7px;color:#111">0.00 °</div><div class="a" style="left:1729px;top:867px;width:749px;height:1.5px;background:#d0d0d0"></div><div class="a" style="left:1729px;top:882px;width:689px;height:46px;box-sizing:border-box;border:2px solid #a2a2a2;border-radius:6px;background:linear-gradient(#fefefe,#f4f4f4)"></div><div class="a" style="left:2377px;top:884px;width:1.5px;height:42px;background:#cfcfcf"></div><div class="a t " style="left:1790px;top:891.1px;font-size:27.8px;color:#111">Topology</div><div class="a" style="left:1729px;top:937px;width:749px;height:191px;box-sizing:border-box;border:1.2px solid #b4b4b4;background:#fff"></div><div class="a" style="left:2449px;top:938px;width:28px;height:189px;background:linear-gradient(90deg,#f3f3f3,#fbfbfb);border-left:1px solid #d0d0d0"></div><div class="a" style="left:2450px;top:965px;width:27px;height:1.2px;background:#d0d0d0"></div><div class="a" style="left:2450px;top:1018px;width:27px;height:81px;background:#e0e0e0;border-top:1px solid #cfcfcf;border-bottom:1px solid #cfcfcf"></div><div class="a t b" style="left:1742px;top:955.4px;font-size:27.3px;color:#222">Project Styles</div><div class="a" style="left:1740px;top:986px;width:694px;height:1.8px;background:#8a8a8a"></div><div class="a t b" style="left:1742px;top:1005.6px;font-size:27.3px;color:#222">Default</div><div class="a" style="left:1740px;top:1036px;width:694px;height:1.8px;background:#8a8a8a"></div><div class="a" style="left:2497px;top:715px;width:28px;height:473px;background:linear-gradient(90deg,#f2f2f2,#fdfdfd);border-left:1.5px solid #d0d0d0"></div><div class="a" style="left:2498px;top:741px;width:27px;height:1.2px;background:#d0d0d0"></div><div class="a" style="left:2498px;top:743px;width:27px;height:76px;background:#e0e0e0;border-bottom:1.5px solid #cfcfcf"></div><div class="a" style="left:2498px;top:1178px;width:27px;height:1.2px;background:#d0d0d0"></div><div class="a" style="left:1729.5px;top:1142px;width:46.5px;height:44px;box-sizing:border-box;border:1.5px solid #b0b0b0;border-radius:5px;background:linear-gradient(#e2e2e2,#d6d6d6)"></div><div class="a" style="left:2114px;top:1142px;width:192px;height:45px;box-sizing:border-box;border:1.5px solid #b0b0b0;border-radius:5px;background:linear-gradient(#fdfdfd,#f1f1f1)"></div><div class="a t " style="left:2122px;top:1152.3px;font-size:26.1px;color:#111">Save Symbol...</div><div class="a" style="left:2319px;top:1142px;width:159px;height:46px;box-sizing:border-box;border:1.5px solid #5a9ee0;border-radius:5px;background:linear-gradient(#d6dbe2,#c9cfd8)"></div><div class="a t " style="left:2328px;top:1152.1px;font-size:26.4px;color:#111">Advanced</div><div class="a t b" style="left:1773px;top:1236.4px;font-size:26.4px;color:#222">Layer Rendering</div><div class="a" style="left:1729.5px;top:1280px;width:46.5px;height:44px;box-sizing:border-box;border:1.5px solid #b0b0b0;border-radius:5px;background:linear-gradient(#fdfdfd,#f1f1f1)"></div><div class="a" style="left:1789px;top:1280px;width:47px;height:44px;box-sizing:border-box;border:1.5px solid #b0b0b0;border-radius:5px;background:linear-gradient(#fdfdfd,#f1f1f1)"></div><div class="a" style="left:2094px;top:1189px;width:433px;height:142px;background:#fff;box-shadow:0 2px 6px rgba(0,0,0,0.35)"></div><div class="a t " style="left:2149px;top:1201.0px;font-size:26.6px;color:#111">Symbol Levels...</div><div class="a" style="left:2096px;top:1237px;width:431px;height:47px;background:#7ba4ea"></div><div class="a t " style="left:2149px;top:1248.6px;font-size:27px;color:#fff">Data-defined Size Legend...</div><div class="a t " style="left:2149px;top:1297.0px;font-size:26.9px;color:#111">Animation Settings...</div><div class="a" style="left:2312px;top:1136px;width:177px;height:58px;box-sizing:border-box;border:3.6px solid #f0301a"></div><div class="a" style="left:2093px;top:1231px;width:421px;height:60px;box-sizing:border-box;border:4px solid #f0301a"></div><svg class="a" style="left:0;top:0" width="2527" height="1389" viewBox="0 0 2527 1389"><circle cx="1667" cy="362" r="2.6" fill="none" stroke="#666" stroke-width="1.2"/><circle cx="1670.5" cy="349" r="2.6" fill="none" stroke="#666" stroke-width="1.2"/><circle cx="1684" cy="342.5" r="2.6" fill="none" stroke="#666" stroke-width="1.2"/><path d="M2493.5,349 L2510.5,349 L2502,357.5 Z" fill="#444"/><g transform="translate(1661,407) scale(1.25)"><path d="M0,13 L10,0 L24,8 L17,25 Z" fill="#e84040"/><path d="M2,9 L12,0 L24,6 L18,17 Z" fill="#7ba7dc"/><path d="M5,4 L13,-3 L25,3 L21,10 Z" fill="#f5e050"/><path d="M9,16 L17,8 L26,15 L17,24 Z" fill="#e8b870" stroke="#b07a30" stroke-width="1"/><line x1="21" y1="12" x2="30" y2="0" stroke="#d08a30" stroke-width="3.5" stroke-linecap="round"/></g><rect x="1745" y="412" width="19" height="7" fill="#1a9a4a" stroke="#0a5a2a" stroke-width="1"/><rect x="1752" y="423" width="19" height="7" fill="#1a9a4a" stroke="#0a5a2a" stroke-width="1"/><rect x="1745" y="433" width="19" height="7" fill="#1a9a4a" stroke="#0a5a2a" stroke-width="1"/><path d="M2493.5,421 L2510.5,421 L2502,429.5 Z" fill="#444"/><path d="M1665,474 L1697,474 L1697,496 L1665,496 L1657,485 Z" fill="#fbe34a" stroke="#c9a000" stroke-width="2"/><text x="1679" y="492" font-size="17" font-weight="bold" fill="#111" text-anchor="middle" font-family="Liberation Mono">abc</text><rect x="1655" y="535" width="45" height="23" rx="11" fill="#e8ecf8"/><text x="1677.5" y="555" font-size="21" font-weight="bold" fill="#2a2e3a" text-anchor="middle" font-family="Liberation Sans">abc</text><path d="M1677,591 L1696,603 L1677,614 L1658,603 Z" fill="#f59a9a" stroke="#b81010" stroke-width="2"/><path d="M1658,603 L1677,614 L1677,634 L1658,622 Z" fill="#8ee040" stroke="#5a9a20" stroke-width="2"/><path d="M1696,603 L1677,614 L1677,634 L1696,622 Z" fill="#fde74c" stroke="#c9a000" stroke-width="2"/><rect x="1668" y="655" width="19" height="11" fill="#e85a5a"/><rect x="1675" y="666" width="4" height="24" fill="#d9a040"/><path d="M1665,667 V685 M1690,667 V685" stroke="#d9a040" stroke-width="3.5"/><rect x="1655" y="684" width="19" height="14" fill="#f5e050"/><rect x="1680" y="684" width="19" height="14" fill="#8ab8e8"/><rect x="1655" y="682" width="19" height="4" fill="#c98a30"/><rect x="1680" y="682" width="19" height="4" fill="#c98a30"/><path d="M1662,737 C1658,730 1664,724 1672,725 L1672,721 L1682,729 L1672,736 L1672,732 C1668,731 1665,733 1667,737 Z" fill="#8cc88c"/><path d="M1694,753 C1698,746 1692,740 1684,741 L1684,737 L1674,745 L1684,752 L1684,748 C1688,747 1691,750 1688,755 Z" fill="#f08a3a" stroke="#c86020" stroke-width="0.8"/><line x1="1830.5" y1="473" x2="1830.5" y2="673" stroke="#909090" stroke-width="1.6"/><line x1="1729" y1="574" x2="1928" y2="574" stroke="#909090" stroke-width="1.6"/><path d="M1955.5,477 L1970.5,477 L1963,485.5 Z" fill="#555"/><path d="M1995.5,513 L2010.5,513 L2003,521.5 Z" fill="#555"/><path d="M2035.5,549 L2050.5,549 L2043,557.5 Z" fill="#555"/><circle cx="2006.5" cy="481.5" r="5.5" fill="none" stroke="#7fd07f" stroke-width="2.2"/><rect x="2069" y="537" width="32" height="32" fill="#22a822"/><rect x="2073" y="541" width="24" height="24" fill="#5cc05c"/><rect x="2077" y="545" width="16" height="16" fill="#a8e0a8"/><rect x="2081" y="549" width="8" height="8" fill="#f0fff0"/><rect x="2109" y="574" width="32" height="32" fill="#22a822"/><rect x="2113" y="578" width="24" height="24" fill="#5cc05c"/><rect x="2117" y="582" width="16" height="16" fill="#a8e0a8"/><rect x="2121" y="586" width="8" height="8" fill="#f0fff0"/><path d="M2422,473 H2436 V479 H2442 V493 H2436 V499 H2422 V493 H2416 V479 H2422 Z" fill="none" stroke="#3a8a3a" stroke-width="2.2" transform="translate(0,0)"/><path d="M2425,476 H2433 V482 H2439 V490 H2433 V496 H2425 V490 H2419 V482 H2425 Z" fill="#fff" stroke="none"/><path d="M2429,476 V496 M2419,486 H2439" stroke="#3a8a3a" stroke-width="2"/><path d="M2484,493 L2496.5,476 L2509,493 Z" fill="#e8e8e8" stroke="#c8c8c8" stroke-width="1.5"/><rect x="2419" y="536" width="20" height="7" rx="1" fill="none" stroke="#e0cccc" stroke-width="1.8"/><path d="M2484,529 L2496.5,546 L2509,529 Z" fill="#e8e8e8" stroke="#c8c8c8" stroke-width="1.5"/><rect x="2418" y="584" width="20" height="22" fill="#ececec" stroke="#d0d0d0" stroke-width="1.5"/><rect x="2422" y="588" width="18" height="20" fill="#f2f2f2" stroke="#d0d0d0" stroke-width="1.5"/><rect x="2485" y="596" width="22" height="15" rx="1" fill="#e0ddd5"/><path d="M2501,596 V590 C2501,583 2491,583 2491,590" fill="none" stroke="#d8d5cc" stroke-width="2.5"/><path d="M2096.0,766 L2110.0,766 L2103,757.5 Z" fill="#444"/><path d="M2096.0,772 L2110.0,772 L2103,780.5 Z" fill="#444"/><path d="M2375.0,765 L2391.0,765 L2383,773.5 Z" fill="#444"/><path d="M2436,757 L2426,769 L2436,781 Z" fill="#888"/><rect x="2436" y="754" width="25" height="31" fill="#fbeb96" stroke="#c9a000" stroke-width="2.2"/><path d="M2436,769 H2461" stroke="#c9a000" stroke-width="1.6"/><path d="M2441,761 H2456 M2441,777 H2456" stroke="#555" stroke-width="2.2"/><path d="M2467,778 L2477,778 L2472,782 Z" fill="#555"/><path d="M2384.0,830 L2398.0,830 L2391,821.5 Z" fill="#444"/><path d="M2384.0,836 L2398.0,836 L2391,844.5 Z" fill="#444"/><path d="M2436,820 L2426,832 L2436,844 Z" fill="#888"/><rect x="2436" y="817" width="25" height="31" fill="#fff" stroke="#777" stroke-width="2.2"/><path d="M2436,832 H2461" stroke="#777" stroke-width="1.6"/><path d="M2441,824 H2456 M2441,840 H2456" stroke="#555" stroke-width="2.2"/><path d="M2467,841 L2477,841 L2472,845 Z" fill="#555"/><circle cx="1760" cy="902" r="7.5" fill="none" stroke="#666" stroke-width="2"/><line x1="1765.5" y1="907.5" x2="1773" y2="915" stroke="#666" stroke-width="2.2"/><path d="M2340,895 L2360,895 L2360,913 L2340,913 L2333,904 Z" fill="#666"/><path d="M2343,899 L2353,909 M2353,899 L2343,909" stroke="#fff" stroke-width="2"/><path d="M2388.0,900 L2404.0,900 L2396,908.5 Z" fill="#444"/><circle cx="2447.6" cy="895.2" r="5.5" fill="#d96a34" stroke="#8c3b16" stroke-width="1"/><line x1="2458" y1="900" x2="2467" y2="891" stroke="#4d7ab8" stroke-width="2.5" stroke-linecap="round"/><rect x="2442" y="904" width="11.6" height="11.7" fill="#8fb08f" stroke="#4f7f4f" stroke-width="1.2"/><text x="2458" y="915" font-size="14" fill="#333" font-family="Liberation Sans">a</text><path d="M2455.5,955 L2470.5,955 L2463,946.5 Z" fill="#555"/><path d="M2455.5,1108.5 L2470.5,1108.5 L2463,1117.0 Z" fill="#555"/><rect x="1863" y="1118" width="2.5" height="9" fill="#222"/><path d="M2109,1127 V1121 Q2109,1117 2113,1117 H2137 Q2141,1117 2141,1121 V1127" fill="none" stroke="#222" stroke-width="1.8"/><rect x="2124" y="1122" width="2" height="4" fill="#222"/><path d="M2503.5,731 L2518.5,731 L2511,722.5 Z" fill="#444"/><rect x="1741" y="1152" width="24" height="24" fill="#6b9ac9"/><rect x="1743.0" y="1154.0" width="5.5" height="5.5" fill="#dce8f5"/><rect x="1743.0" y="1161.5" width="5.5" height="5.5" fill="#dce8f5"/><rect x="1743.0" y="1169.0" width="5.5" height="5.5" fill="#dce8f5"/><rect x="1750.5" y="1154.0" width="5.5" height="5.5" fill="#dce8f5"/><rect x="1750.5" y="1161.5" width="5.5" height="5.5" fill="#dce8f5"/><rect x="1750.5" y="1169.0" width="5.5" height="5.5" fill="#dce8f5"/><rect x="1758.0" y="1154.0" width="5.5" height="5.5" fill="#dce8f5"/><rect x="1758.0" y="1161.5" width="5.5" height="5.5" fill="#dce8f5"/><rect x="1758.0" y="1169.0" width="5.5" height="5.5" fill="#dce8f5"/><rect x="1788" y="1151" width="26" height="25" fill="#f4f8fc" stroke="#6b9ac9" stroke-width="1.6"/><rect x="1789" y="1152" width="24" height="5" fill="#b9d5f0"/><path d="M1791,1162 H1796 M1799,1162 H1811 M1791,1167 H1796 M1799,1167 H1811 M1791,1172 H1796 M1799,1172 H1811" stroke="#6b9ac9" stroke-width="1.5"/><path d="M2456.5,1161 L2469.5,1161 L2463,1169.5 Z" fill="#555"/><path d="M1739,1238 L1753,1249.5 L1739,1261 Z" fill="#222"/><path d="M1737,1300 L1749,1289 L1749,1296 C1760,1295 1767,1301 1766,1309 C1765,1315 1760,1317 1756,1317 L1756,1311 C1760,1311 1761,1307 1759,1305 C1757,1303 1752,1304 1749,1304 L1749,1311 Z" fill="#e8803a"/><path d="M1828,1300 L1816,1289 L1816,1296 C1805,1295 1798,1301 1799,1309 C1800,1315 1805,1317 1809,1317 L1809,1311 C1805,1311 1804,1307 1806,1305 C1808,1303 1813,1304 1816,1304 L1816,1311 Z" fill="#5cb85c"/></svg><div class="a" style="left:1634px;top:792px;width:2px;height:2px;background:#c4c4c4"></div><div class="a" style="left:1634px;top:798px;width:2px;height:2px;background:#c4c4c4"></div><div class="a" style="left:1634px;top:804px;width:2px;height:2px;background:#c4c4c4"></div><div class="a" style="left:1634px;top:810px;width:2px;height:2px;background:#c4c4c4"></div><div class="a" style="left:1634px;top:816px;width:2px;height:2px;background:#c4c4c4"></div><div class="a" style="left:1634px;top:822px;width:2px;height:2px;background:#c4c4c4"></div><div class="a" style="left:1634px;top:828px;width:2px;height:2px;background:#c4c4c4"></div><div class="a" style="left:0px;top:1332px;width:2527px;height:57px;background:linear-gradient(#ececec,#dfdfdf)"></div><div class="a" style="left:2px;top:1340px;width:426px;height:46px;box-sizing:border-box;border:2px solid #a2a2a2;border-radius:7px;background:linear-gradient(#ffffff,#f3f3f3)"></div><div class="a t " style="left:60px;top:1350.1px;font-size:26.5px;color:#777">Type to locate (⌘K)</div><div class="a t " style="left:728px;top:1352.2px;font-size:23.1px;color:#1a1a1a">Coordinate</div><div class="a" style="left:850px;top:1341.5px;width:246px;height:42.5px;box-sizing:border-box;border:2px solid #a2a2a2;border-radius:5px;background:linear-gradient(#ffffff,#f3f3f3)"></div><div class="a t " style="left:866px;top:1350.6px;font-size:25.1px;color:#1a1a1a">2099398,-4061326</div><div class="a t " style="left:1164px;top:1352.8px;font-size:22.4px;color:#1a1a1a">Scale</div><div class="a" style="left:1227px;top:1341.5px;width:185px;height:42.5px;box-sizing:border-box;border:2px solid #a2a2a2;border-radius:5px;background:linear-gradient(#ffffff,#f3f3f3)"></div><div class="a" style="left:1371px;top:1343px;width:1.5px;height:39px;background:#c8c8c8"></div><div class="a t " style="left:1235px;top:1352.5px;font-size:22.8px;color:#1a1a1a">1:1356978</div><div class="a t " style="left:1480px;top:1352.0px;font-size:23.4px;color:#1a1a1a">Magnifier</div><div class="a" style="left:1586px;top:1342px;width:184px;height:43.5px;box-sizing:border-box;border:2px solid #a2a2a2;border-radius:5px;background:linear-gradient(#ffffff,#f3f3f3)"></div><div class="a" style="left:1740px;top:1344px;width:1.5px;height:40px;background:#c8c8c8"></div><div class="a t " style="left:1595px;top:1351.3px;font-size:25px;color:#1a1a1a">100%</div><div class="a t " style="left:1790px;top:1353.3px;font-size:22.9px;color:#1a1a1a">Rotation</div><div class="a" style="left:1896px;top:1342px;width:184px;height:42.5px;box-sizing:border-box;border:2px solid #a2a2a2;border-radius:5px;background:#fff"></div><div class="a" style="left:2051px;top:1344px;width:1.5px;height:39px;background:#c8c8c8"></div><div class="a t " style="left:1906px;top:1351.5px;font-size:25px;color:#1a1a1a">0.0 °</div><div class="a t " style="left:2131px;top:1354.1px;font-size:22px;color:#1a1a1a">Render</div><div class="a t " style="left:2274px;top:1353.8px;font-size:22.3px;color:#1a1a1a">EPSG:3857</div><svg class="a" style="left:0;top:0" width="2527" height="1389" viewBox="0 0 2527 1389"><circle cx="30.5" cy="1361" r="9" fill="none" stroke="#777" stroke-width="2.2"/><line x1="37" y1="1367.5" x2="43" y2="1373.5" stroke="#777" stroke-width="2.8"/><path d="M1110,1350 C1104,1356 1106,1368 1114,1373 C1120,1377 1128,1376 1131,1370 C1134,1363 1128,1355 1122,1350 C1117,1346 1113,1347 1110,1350 Z" fill="#fff" stroke="#222" stroke-width="2.2"/><circle cx="1125" cy="1369" r="4" fill="none" stroke="#222" stroke-width="1.8"/><path d="M1116,1354 L1121,1362" stroke="#222" stroke-width="2.5"/><path d="M1128,1349 L1136,1345" stroke="#222" stroke-width="1.5" stroke-dasharray="2 2"/><path d="M1381,1358 L1397,1358 L1389,1366 Z" fill="#555"/><rect x="1437" y="1362" width="23" height="16" rx="2" fill="#555"/><path d="M1441,1362 V1357 C1441,1348 1456,1348 1456,1357 V1362" fill="none" stroke="#555" stroke-width="3"/><path d="M1748,1358 L1762,1358 L1755,1351 Z" fill="#555"/><path d="M1748,1370 L1762,1370 L1755,1377 Z" fill="#555"/><path d="M2059,1358 L2073,1358 L2066,1351 Z" fill="#555"/><path d="M2059,1370 L2073,1370 L2066,1377 Z" fill="#555"/><rect x="2094" y="1350.5" width="26" height="26" rx="2" fill="#fff" stroke="#b8b8b8" stroke-width="1.2"/><path d="M2099.5,1363 L2105,1372 L2115,1355" fill="none" stroke="#111" stroke-width="2.6"/><circle cx="2252.5" cy="1363" r="14" fill="none" stroke="#555" stroke-width="1.8"/><ellipse cx="2252.5" cy="1363" rx="6" ry="14" fill="none" stroke="#555" stroke-width="1.6"/><path d="M2238.5,1363 H2266.5 M2241,1356 H2264 M2241,1370 H2264" stroke="#555" stroke-width="1.6"/><ellipse cx="2454" cy="1361" rx="16" ry="13" fill="#555"/><path d="M2446,1370 L2444,1380 L2454,1372 Z" fill="#555"/><circle cx="2446" cy="1361" r="2.3" fill="#fff"/><circle cx="2454" cy="1361" r="2.3" fill="#fff"/><circle cx="2462" cy="1361" r="2.3" fill="#fff"/></svg><svg class="a" style="left:0;top:0" width="2527" height="1389" viewBox="0 0 2527 1389"><rect x="3.5" y="73" width="2.2" height="2.2" fill="#c6c6c6"/><rect x="10.0" y="73" width="2.2" height="2.2" fill="#c6c6c6"/><rect x="3.5" y="79.2" width="2.2" height="2.2" fill="#c6c6c6"/><rect x="10.0" y="79.2" width="2.2" height="2.2" fill="#c6c6c6"/><rect x="3.5" y="85.4" width="2.2" height="2.2" fill="#c6c6c6"/><rect x="10.0" y="85.4" width="2.2" height="2.2" fill="#c6c6c6"/><rect x="3.5" y="91.60000000000001" width="2.2" height="2.2" fill="#c6c6c6"/><rect x="10.0" y="91.60000000000001" width="2.2" height="2.2" fill="#c6c6c6"/><rect x="3.5" y="97.80000000000001" width="2.2" height="2.2" fill="#c6c6c6"/><rect x="10.0" y="97.80000000000001" width="2.2" height="2.2" fill="#c6c6c6"/><rect x="3.5" y="104.00000000000001" width="2.2" height="2.2" fill="#c6c6c6"/><rect x="10.0" y="104.00000000000001" width="2.2" height="2.2" fill="#c6c6c6"/><path d="M36,68 L55,68 L66,79 L66,110 L36,110 Z" fill="#fff" stroke="#6e6e6e" stroke-width="2.2" stroke-linejoin="miter"/><path d="M55,68 L55,79 L66,79" fill="none" stroke="#6e6e6e" stroke-width="2.2"/><path d="M95,72 L109,72 L109,76 L133,76 L133,82 L95,82 Z" fill="#fdd94e" stroke="#c5a636" stroke-width="1.6"/><path d="M95,72 L95,106 L133,106 L139,81 L101,81 L95,106" fill="#fdd94e" stroke="#c5a636" stroke-width="1.6" stroke-linejoin="round"/><rect x="164" y="68" width="38" height="41" rx="4" fill="#6b9ac9" stroke="#3f5f85" stroke-width="2"/><rect x="171" y="69" width="25" height="16" rx="1.5" fill="#eee" stroke="#777" stroke-width="1"/><path d="M175,73.5 H192 M175,77.5 H192 M175,81.5 H192" stroke="#555" stroke-width="1.5"/><rect x="173" y="94" width="21" height="15" fill="#e8e8e8" stroke="#777" stroke-width="1"/><rect x="176" y="97" width="5" height="8" fill="#3f5f85"/><path d="M228,69 L260,69 L270,79 L270,109 L228,109 Z" fill="#fff" stroke="#6e6e6e" stroke-width="2.2" stroke-linejoin="miter"/><path d="M260,69 L260,79 L270,79" fill="none" stroke="#6e6e6e" stroke-width="2.2"/><path d="M231,70 L250,70 L250,80 L240,80 L240,111 L231,111 Z" fill="#f8d65a" stroke="#c9a000" stroke-width="1.5"/><rect x="232" y="71" width="16" height="8" fill="#fbe79a"/><line x1="232" y1="83" x2="237" y2="83" stroke="#b08c00" stroke-width="1.2"/><line x1="232" y1="87" x2="237" y2="87" stroke="#b08c00" stroke-width="1.2"/><line x1="232" y1="91" x2="237" y2="91" stroke="#b08c00" stroke-width="1.2"/><line x1="232" y1="95" x2="237" y2="95" stroke="#b08c00" stroke-width="1.2"/><line x1="232" y1="99" x2="237" y2="99" stroke="#b08c00" stroke-width="1.2"/><line x1="232" y1="103" x2="237" y2="103" stroke="#b08c00" stroke-width="1.2"/><line x1="232" y1="107" x2="237" y2="107" stroke="#b08c00" stroke-width="1.2"/><rect x="251" y="91" width="22" height="22" rx="3" fill="#c9a000"/><line x1="262.0" y1="102.0" x2="269.3" y2="102.0" stroke="#fff" stroke-width="2.6"/><line x1="262.0" y1="102.0" x2="267.1" y2="107.1" stroke="#fff" stroke-width="2.6"/><line x1="262.0" y1="102.0" x2="262.0" y2="109.3" stroke="#fff" stroke-width="2.6"/><line x1="262.0" y1="102.0" x2="256.9" y2="107.1" stroke="#fff" stroke-width="2.6"/><line x1="262.0" y1="102.0" x2="254.7" y2="102.0" stroke="#fff" stroke-width="2.6"/><line x1="262.0" y1="102.0" x2="256.9" y2="96.9" stroke="#fff" stroke-width="2.6"/><line x1="262.0" y1="102.0" x2="262.0" y2="94.7" stroke="#fff" stroke-width="2.6"/><line x1="262.0" y1="102.0" x2="267.1" y2="96.9" stroke="#fff" stroke-width="2.6"/><circle cx="262.0" cy="102.0" r="4.4" fill="#fff"/><circle cx="262.0" cy="102.0" r="1.8" fill="#c9a000"/><path d="M294,69 L326,69 L336,79 L336,108 L294,108 Z" fill="#fff" stroke="#6e6e6e" stroke-width="2.2" stroke-linejoin="miter"/><path d="M326,69 L326,79 L336,79" fill="none" stroke="#6e6e6e" stroke-width="2.2"/><rect x="298" y="73" width="32" height="31" fill="none" stroke="#b7c9ef" stroke-width="1.5"/><path d="M311,82 a6,6 0 1 1 6,6 L334,107 L330,111 L313,92 a6,6 0 0 1 -2,-10" fill="#f0d877" stroke="#333" stroke-width="1.6"/><circle cx="370" cy="77.5" r="8.5" fill="#d96a34" stroke="#8c3b16" stroke-width="1.2"/><line x1="385" y1="85" x2="399" y2="70" stroke="#4d7ab8" stroke-width="4" stroke-linecap="round"/><rect x="362" y="91" width="17" height="17" fill="#8fb08f" stroke="#4f7f4f" stroke-width="1.5"/><text x="384" y="107" font-size="22" fill="#333" font-family="Liberation Sans">a</text><rect x="431.5" y="73" width="2.2" height="2.2" fill="#c6c6c6"/><rect x="438.0" y="73" width="2.2" height="2.2" fill="#c6c6c6"/><rect x="431.5" y="79.2" width="2.2" height="2.2" fill="#c6c6c6"/><rect x="438.0" y="79.2" width="2.2" height="2.2" fill="#c6c6c6"/><rect x="431.5" y="85.4" width="2.2" height="2.2" fill="#c6c6c6"/><rect x="438.0" y="85.4" width="2.2" height="2.2" fill="#c6c6c6"/><rect x="431.5" y="91.60000000000001" width="2.2" height="2.2" fill="#c6c6c6"/><rect x="438.0" y="91.60000000000001" width="2.2" height="2.2" fill="#c6c6c6"/><rect x="431.5" y="97.80000000000001" width="2.2" height="2.2" fill="#c6c6c6"/><rect x="438.0" y="97.80000000000001" width="2.2" height="2.2" fill="#c6c6c6"/><rect x="431.5" y="104.00000000000001" width="2.2" height="2.2" fill="#c6c6c6"/><rect x="438.0" y="104.00000000000001" width="2.2" height="2.2" fill="#c6c6c6"/><rect x="448" y="60" width="62" height="60" rx="5" fill="#d9d9d9" stroke="#a9a9a9" stroke-width="1.5"/><path d="M471,110 C466,102 460,95 458,88 C457,85 460,84 462,86 L467,92 L467,70 C467,66 472,66 472,70 L472,86 L473,68 C473,64 478,64 478,68 L478,86 L479,70 C479,66 484,66 484,70 L484,87 L485,74 C485,70 490,70 490,74 L490,96 C490,102 487,106 486,110 Z" fill="#fff" stroke="#111" stroke-width="2" stroke-linejoin="round"/><rect x="525" y="69" width="28" height="28" fill="#fde74c" stroke="#c9a000" stroke-width="1.5"/><path d="M545,66 L553,75 L548,75 L548,82 L542,82 L542,75 L537,75 Z M545,112 L553,103 L548,103 L548,96 L542,96 L542,103 L537,103 Z M522,89 L531,81 L531,86 L538,86 L538,92 L531,92 L531,97 Z M568,89 L559,81 L559,86 L552,86 L552,92 L559,92 L559,97 Z" fill="#6b9ac9" stroke="#3f5f85" stroke-width="1.2"/><line x1="603.3" y1="96.3" x2="584.3" y2="115.3" stroke="#333" stroke-width="8" stroke-linecap="butt"/><line x1="599.3" y1="100.3" x2="585.8" y2="113.8" stroke="#f5c842" stroke-width="4"/><circle cx="603.3" cy="96.3" r="2.5" fill="#333"/><circle cx="616" cy="83.6" r="16.6" fill="#ececec" stroke="#6a6a6a" stroke-width="2.6"/><path d="M606,83.6 H626 M616,73.6 V93.6" stroke="#6b9ac9" stroke-width="4.5" stroke-linecap="round"/><line x1="669.3" y1="96.3" x2="650.3" y2="115.3" stroke="#333" stroke-width="8" stroke-linecap="butt"/><line x1="665.3" y1="100.3" x2="651.8" y2="113.8" stroke="#f5c842" stroke-width="4"/><circle cx="669.3" cy="96.3" r="2.5" fill="#333"/><circle cx="682" cy="83.6" r="16.6" fill="#ececec" stroke="#6a6a6a" stroke-width="2.6"/><path d="M672,83.6 H692" stroke="#6b9ac9" stroke-width="4.5" stroke-linecap="round"/><line x1="734.7" y1="96.3" x2="715.7" y2="115.3" stroke="#333" stroke-width="8" stroke-linecap="butt"/><line x1="730.7" y1="100.3" x2="717.2" y2="113.8" stroke="#f5c842" stroke-width="4"/><circle cx="734.7" cy="96.3" r="2.5" fill="#333"/><circle cx="747.4" cy="83.6" r="16.6" fill="#ececec" stroke="#6a6a6a" stroke-width="2.6"/><path d="M726,66 L740,66 L735,71 L741,77 L736,82 L730,76 L726,80 Z M767,66 L753,66 L758,71 L752,77 L757,82 L763,76 L767,80 Z M767,106 L753,106 L758,101 L752,95 L757,90 L763,96 L767,92 Z" fill="#6b9ac9" stroke="#3f5f85" stroke-width="1.2"/><rect x="785" y="70" width="26" height="26" fill="#fde74c" stroke="#c9a000" stroke-width="1.5"/><line x1="802.8" y1="95.4" x2="783.8" y2="114.4" stroke="#333" stroke-width="8" stroke-linecap="butt"/><line x1="798.8" y1="99.4" x2="785.3" y2="112.9" stroke="#f5c842" stroke-width="4"/><circle cx="802.8" cy="95.4" r="2.5" fill="#333"/><circle cx="815.5" cy="82.7" r="16.6" fill="rgba(236,236,220,0.85)" stroke="#6a6a6a" stroke-width="2.6"/><rect x="852" y="69" width="26" height="26" fill="none" stroke="#777" stroke-width="1.6"/><line x1="868.5" y1="95.1" x2="849.5" y2="114.1" stroke="#333" stroke-width="8" stroke-linecap="butt"/><line x1="864.5" y1="99.1" x2="851.0" y2="112.6" stroke="#f5c842" stroke-width="4"/><circle cx="868.5" cy="95.1" r="2.5" fill="#333"/><circle cx="881.2" cy="82.4" r="16.6" fill="rgba(236,236,236,0.8)" stroke="#6a6a6a" stroke-width="2.6"/><rect x="918" y="69" width="26" height="26" fill="none" stroke="#ddd" stroke-width="1.6"/><line x1="933.3" y1="96.3" x2="914.3" y2="115.3" stroke="#c8c8c8" stroke-width="8" stroke-linecap="butt"/><line x1="929.3" y1="100.3" x2="915.8" y2="113.8" stroke="#dcdcdc" stroke-width="4"/><circle cx="933.3" cy="96.3" r="2.5" fill="#c8c8c8"/><circle cx="946" cy="83.6" r="16.6" fill="rgba(236,236,236,0.8)" stroke="#d0d0d0" stroke-width="2.6"/><text x="946" y="91" font-size="17" font-weight="bold" fill="#cfcfcf" text-anchor="middle" font-family="Liberation Sans">1:1</text><line x1="999.3" y1="96.3" x2="980.3" y2="115.3" stroke="#333" stroke-width="8" stroke-linecap="butt"/><line x1="995.3" y1="100.3" x2="981.8" y2="113.8" stroke="#f5c842" stroke-width="4"/><circle cx="999.3" cy="96.3" r="2.5" fill="#333"/><circle cx="1012" cy="83.6" r="16.6" fill="#ececec" stroke="#6a6a6a" stroke-width="2.6"/><rect x="1009" y="91" width="22" height="22" rx="2" fill="#6b9ac9" stroke="#333" stroke-width="1.3"/><path d="M1024,96 L1015,102 L1024,108" fill="none" stroke="#fff" stroke-width="3"/><line x1="1065.0" y1="96.3" x2="1046.0" y2="115.3" stroke="#c8c8c8" stroke-width="8" stroke-linecap="butt"/><line x1="1061.0" y1="100.3" x2="1047.5" y2="113.8" stroke="#dcdcdc" stroke-width="4"/><circle cx="1065.0" cy="96.3" r="2.5" fill="#c8c8c8"/><circle cx="1077.7" cy="83.6" r="16.6" fill="#ececec" stroke="#d0d0d0" stroke-width="2.6"/><rect x="1074" y="91" width="22" height="22" rx="2" fill="#d6d9dc" stroke="#ccc" stroke-width="1.3"/><path d="M1081,96 L1090,102 L1081,108" fill="none" stroke="#fff" stroke-width="3"/><path d="M1124,68 L1163,70 L1163,108 L1124,108 Z" fill="#e6e6e6" stroke="#8a8a8a" stroke-width="1.8"/><path d="M1120,72 C1120,66 1128,66 1128,72 L1128,106 C1124,102 1120,104 1120,108 Z" fill="#d5d5d5" stroke="#8a8a8a" stroke-width="1.6"/><rect x="1141" y="91" width="22" height="22" rx="3" fill="#c9a000"/><line x1="1152.0" y1="102.0" x2="1159.3" y2="102.0" stroke="#fff" stroke-width="2.6"/><line x1="1152.0" y1="102.0" x2="1157.1" y2="107.1" stroke="#fff" stroke-width="2.6"/><line x1="1152.0" y1="102.0" x2="1152.0" y2="109.3" stroke="#fff" stroke-width="2.6"/><line x1="1152.0" y1="102.0" x2="1146.9" y2="107.1" stroke="#fff" stroke-width="2.6"/><line x1="1152.0" y1="102.0" x2="1144.7" y2="102.0" stroke="#fff" stroke-width="2.6"/><line x1="1152.0" y1="102.0" x2="1146.9" y2="96.9" stroke="#fff" stroke-width="2.6"/><line x1="1152.0" y1="102.0" x2="1152.0" y2="94.7" stroke="#fff" stroke-width="2.6"/><line x1="1152.0" y1="102.0" x2="1157.1" y2="96.9" stroke="#fff" stroke-width="2.6"/><circle cx="1152.0" cy="102.0" r="4.4" fill="#fff"/><circle cx="1152.0" cy="102.0" r="1.8" fill="#c9a000"/><path d="M1188,76 L1212,72 L1226,74 L1228,104 L1198,100 L1183,100 Z" fill="#dcdcdc" stroke="#999" stroke-width="1.6"/><path d="M1195,80 L1222,90 M1200,92 L1225,98 M1205,74 L1200,100 M1218,73 L1212,100" stroke="#aaa" stroke-width="1.2" fill="none"/><rect x="1207" y="91" width="22" height="22" rx="3" fill="#c9a000"/><line x1="1218.0" y1="102.0" x2="1225.3" y2="102.0" stroke="#fff" stroke-width="2.6"/><line x1="1218.0" y1="102.0" x2="1223.1" y2="107.1" stroke="#fff" stroke-width="2.6"/><line x1="1218.0" y1="102.0" x2="1218.0" y2="109.3" stroke="#fff" stroke-width="2.6"/><line x1="1218.0" y1="102.0" x2="1212.9" y2="107.1" stroke="#fff" stroke-width="2.6"/><line x1="1218.0" y1="102.0" x2="1210.7" y2="102.0" stroke="#fff" stroke-width="2.6"/><line x1="1218.0" y1="102.0" x2="1212.9" y2="96.9" stroke="#fff" stroke-width="2.6"/><line x1="1218.0" y1="102.0" x2="1218.0" y2="94.7" stroke="#fff" stroke-width="2.6"/><line x1="1218.0" y1="102.0" x2="1223.1" y2="96.9" stroke="#fff" stroke-width="2.6"/><circle cx="1218.0" cy="102.0" r="4.4" fill="#fff"/><circle cx="1218.0" cy="102.0" r="1.8" fill="#c9a000"/><path d="M1262,68 L1281,68 L1281,110 L1262,94 Z" fill="#6b9ac9" stroke="#3f5f85" stroke-width="2"/><rect x="1273" y="91" width="22" height="22" rx="3" fill="#c9a000"/><line x1="1284.0" y1="102.0" x2="1291.3" y2="102.0" stroke="#fff" stroke-width="2.6"/><line x1="1284.0" y1="102.0" x2="1289.1" y2="107.1" stroke="#fff" stroke-width="2.6"/><line x1="1284.0" y1="102.0" x2="1284.0" y2="109.3" stroke="#fff" stroke-width="2.6"/><line x1="1284.0" y1="102.0" x2="1278.9" y2="107.1" stroke="#fff" stroke-width="2.6"/><line x1="1284.0" y1="102.0" x2="1276.7" y2="102.0" stroke="#fff" stroke-width="2.6"/><line x1="1284.0" y1="102.0" x2="1278.9" y2="96.9" stroke="#fff" stroke-width="2.6"/><line x1="1284.0" y1="102.0" x2="1284.0" y2="94.7" stroke="#fff" stroke-width="2.6"/><line x1="1284.0" y1="102.0" x2="1289.1" y2="96.9" stroke="#fff" stroke-width="2.6"/><circle cx="1284.0" cy="102.0" r="4.4" fill="#fff"/><circle cx="1284.0" cy="102.0" r="1.8" fill="#c9a000"/><path d="M1322,69 L1357,70 L1357,108 L1322,108 Z" fill="#e2e2e2" stroke="#8a8a8a" stroke-width="1.8"/><path d="M1318,72 C1318,66 1325,66 1325,72 L1325,106 C1322,102 1318,104 1318,108 Z" fill="#d0d0d0" stroke="#8a8a8a" stroke-width="1.5"/><path d="M1339,67 L1348,67 L1348,84 L1343.5,88 L1339,84 Z" fill="#6b9ac9" stroke="#3f5f85" stroke-width="1.5"/><circle cx="1402.8" cy="88.9" r="21" fill="#f1f1f1" stroke="#333" stroke-width="2.2"/><circle cx="1419.3" cy="88.9" r="1.5" fill="#4d7ab8"/><circle cx="1417.1" cy="97.2" r="1.5" fill="#4d7ab8"/><circle cx="1411.0" cy="103.2" r="1.5" fill="#4d7ab8"/><circle cx="1402.8" cy="105.4" r="1.5" fill="#4d7ab8"/><circle cx="1394.5" cy="103.2" r="1.5" fill="#4d7ab8"/><circle cx="1388.5" cy="97.2" r="1.5" fill="#4d7ab8"/><circle cx="1386.3" cy="88.9" r="1.5" fill="#4d7ab8"/><circle cx="1388.5" cy="80.7" r="1.5" fill="#4d7ab8"/><circle cx="1394.5" cy="74.6" r="1.5" fill="#4d7ab8"/><circle cx="1402.8" cy="72.4" r="1.5" fill="#4d7ab8"/><circle cx="1411.0" cy="74.6" r="1.5" fill="#4d7ab8"/><circle cx="1417.1" cy="80.7" r="1.5" fill="#4d7ab8"/><path d="M1402.8,71 L1402.8,89 L1414,96" fill="none" stroke="#8a8a8a" stroke-width="2.2"/><path d="M1452,85 C1452,68 1478,62 1486,75 L1489,68 L1489,86 L1472,86 L1479,80 C1472,72 1460,75 1459,85 Z" fill="#4d85c8" stroke="#3a6aa5" stroke-width="1"/><path d="M1486,92 C1486,109 1460,115 1452,102 L1449,109 L1449,91 L1466,91 L1459,97 C1466,105 1478,102 1479,92 Z" fill="#4d85c8" stroke="#3a6aa5" stroke-width="1"/><rect x="1519.5" y="73" width="2.2" height="2.2" fill="#c6c6c6"/><rect x="1526.0" y="73" width="2.2" height="2.2" fill="#c6c6c6"/><rect x="1519.5" y="79.2" width="2.2" height="2.2" fill="#c6c6c6"/><rect x="1526.0" y="79.2" width="2.2" height="2.2" fill="#c6c6c6"/><rect x="1519.5" y="85.4" width="2.2" height="2.2" fill="#c6c6c6"/><rect x="1526.0" y="85.4" width="2.2" height="2.2" fill="#c6c6c6"/><rect x="1519.5" y="91.60000000000001" width="2.2" height="2.2" fill="#c6c6c6"/><rect x="1526.0" y="91.60000000000001" width="2.2" height="2.2" fill="#c6c6c6"/><rect x="1519.5" y="97.80000000000001" width="2.2" height="2.2" fill="#c6c6c6"/><rect x="1526.0" y="97.80000000000001" width="2.2" height="2.2" fill="#c6c6c6"/><rect x="1519.5" y="104.00000000000001" width="2.2" height="2.2" fill="#c6c6c6"/><rect x="1526.0" y="104.00000000000001" width="2.2" height="2.2" fill="#c6c6c6"/><circle cx="1560" cy="82.3" r="16.8" fill="#6b9ac9" stroke="#4d7ab8" stroke-width="1.2"/><text x="1557" y="93" font-size="25" font-weight="bold" font-style="italic" fill="#fff" text-anchor="middle" font-family="Liberation Serif">i</text><path d="M1566,85 L1566,107 L1571,102 L1576,111 L1580,109 L1575,100 L1582,100 Z" fill="#fff" stroke="#111" stroke-width="1.6" stroke-linejoin="round"/><path d="M1615,69 L1615,107 M1652,69 L1652,107 M1612,108 L1655,108" stroke="#555" stroke-width="2.5" fill="none"/><rect x="1612" y="106" width="43" height="4" fill="#888" stroke="#555" stroke-width="1"/><line x1="1615" y1="73.5" x2="1652" y2="73.5" stroke="#555" stroke-width="1.6"/><circle cx="1629.5" cy="73.5" r="4.6" fill="#f08a8a" stroke="#c02020" stroke-width="1.6"/><circle cx="1644.5" cy="73.5" r="4.6" fill="#f08a8a" stroke="#c02020" stroke-width="1.6"/><line x1="1615" y1="85.5" x2="1652" y2="85.5" stroke="#555" stroke-width="1.6"/><circle cx="1623.5" cy="85.5" r="4.6" fill="#a0e0a0" stroke="#3a9a3a" stroke-width="1.6"/><circle cx="1636" cy="85.5" r="4.6" fill="#a0e0a0" stroke="#3a9a3a" stroke-width="1.6"/><line x1="1615" y1="97.5" x2="1652" y2="97.5" stroke="#555" stroke-width="1.6"/><circle cx="1621.5" cy="97.5" r="4.6" fill="#bfe0f5" stroke="#2f6d8f" stroke-width="1.6"/><circle cx="1632.5" cy="97.5" r="4.6" fill="#bfe0f5" stroke="#2f6d8f" stroke-width="1.6"/><circle cx="1643.5" cy="97.5" r="4.6" fill="#bfe0f5" stroke="#2f6d8f" stroke-width="1.6"/><rect x="1694.4" y="67" width="9" height="10" rx="3" transform="rotate(0 1698.9 89)" fill="#8ab0dd" stroke="#4d7ab8" stroke-width="1.4"/><rect x="1694.4" y="67" width="9" height="10" rx="3" transform="rotate(45 1698.9 89)" fill="#8ab0dd" stroke="#4d7ab8" stroke-width="1.4"/><rect x="1694.4" y="67" width="9" height="10" rx="3" transform="rotate(90 1698.9 89)" fill="#8ab0dd" stroke="#4d7ab8" stroke-width="1.4"/><rect x="1694.4" y="67" width="9" height="10" rx="3" transform="rotate(135 1698.9 89)" fill="#8ab0dd" stroke="#4d7ab8" stroke-width="1.4"/><rect x="1694.4" y="67" width="9" height="10" rx="3" transform="rotate(180 1698.9 89)" fill="#8ab0dd" stroke="#4d7ab8" stroke-width="1.4"/><rect x="1694.4" y="67" width="9" height="10" rx="3" transform="rotate(225 1698.9 89)" fill="#8ab0dd" stroke="#4d7ab8" stroke-width="1.4"/><rect x="1694.4" y="67" width="9" height="10" rx="3" transform="rotate(270 1698.9 89)" fill="#8ab0dd" stroke="#4d7ab8" stroke-width="1.4"/><rect x="1694.4" y="67" width="9" height="10" rx="3" transform="rotate(315 1698.9 89)" fill="#8ab0dd" stroke="#4d7ab8" stroke-width="1.4"/><circle cx="1698.9" cy="89" r="15" fill="#8ab0dd" stroke="#4d7ab8" stroke-width="1.4"/><circle cx="1698.9" cy="89" r="5.5" fill="#f2f2f2" stroke="#4d7ab8" stroke-width="1.2"/><path d="M1750,70 L1780,70 L1778,79 L1772,76 L1761,76 L1770,89 L1759,102 L1772,102 L1779,98 L1780,108 L1750,108 L1764,89 Z" fill="#a312a3" stroke="#6a0a6a" stroke-width="1"/><rect x="1812" y="69.5" width="39" height="39" fill="#e8e8e8" stroke="#6b9ac9" stroke-width="2"/><rect x="1813" y="70.5" width="37" height="9" fill="#b9d9f2"/><path d="M1816,75 H1822 M1826,75 H1846" stroke="#6b9ac9" stroke-width="3"/><path d="M1817,84 H1825 M1829,84 H1846" stroke="#5b8ac0" stroke-width="1.8"/><path d="M1817,90 H1825 M1829,90 H1846" stroke="#5b8ac0" stroke-width="1.8"/><path d="M1817,96 H1825 M1829,96 H1846" stroke="#5b8ac0" stroke-width="1.8"/><path d="M1817,102 H1825 M1829,102 H1846" stroke="#5b8ac0" stroke-width="1.8"/><path d="M1867.5,86.0 L1882.5,86.0 L1875,93.5 Z" fill="#4a4a4a"/><path d="M1901,75 V83 M1941,75 V83 M1901,79 H1941" stroke="#3a5575" stroke-width="3"/><rect x="1900" y="89.5" width="43" height="15" fill="#c8c8c8" stroke="#555" stroke-width="2"/><line x1="1905" y1="90" x2="1905" y2="98" stroke="#555" stroke-width="1.3"/><line x1="1910" y1="90" x2="1910" y2="95" stroke="#555" stroke-width="1.3"/><line x1="1915" y1="90" x2="1915" y2="98" stroke="#555" stroke-width="1.3"/><line x1="1920" y1="90" x2="1920" y2="95" stroke="#555" stroke-width="1.3"/><line x1="1925" y1="90" x2="1925" y2="98" stroke="#555" stroke-width="1.3"/><line x1="1930" y1="90" x2="1930" y2="95" stroke="#555" stroke-width="1.3"/><line x1="1935" y1="90" x2="1935" y2="98" stroke="#555" stroke-width="1.3"/><line x1="1940" y1="90" x2="1940" y2="95" stroke="#555" stroke-width="1.3"/><path d="M1957.5,86.0 L1972.5,86.0 L1965,93.5 Z" fill="#4a4a4a"/><path d="M1994,68 H2028 Q2033,68 2033,73 V87 Q2033,92 2028,92 H2013 L2003,101 L2007,92 H1994 Q1989,92 1989,87 V73 Q1989,68 1994,68 Z" fill="#fbeb96" stroke="#c9a000" stroke-width="2.2"/><circle cx="1998.6" cy="103.3" r="7" fill="#7fbf7f" stroke="#444" stroke-width="2.2"/><circle cx="2073" cy="84" r="17" fill="none" stroke="#d8d8d8" stroke-width="5" stroke-dasharray="5 3"/><circle cx="2073" cy="84" r="11" fill="#dcdcdc" stroke="#ccc" stroke-width="2"/><path d="M2078,90 L2078,110 L2083,105 L2088,113 L2091,111 L2087,103 L2093,103 Z" fill="#fff" stroke="#ccc" stroke-width="1.5"/><path d="M2113.0,86.0 L2128.0,86.0 L2120.5,93.5 Z" fill="#4a4a4a"/><rect x="3.5" y="151" width="2.2" height="2.2" fill="#c6c6c6"/><rect x="10.0" y="151" width="2.2" height="2.2" fill="#c6c6c6"/><rect x="3.5" y="157.2" width="2.2" height="2.2" fill="#c6c6c6"/><rect x="10.0" y="157.2" width="2.2" height="2.2" fill="#c6c6c6"/><rect x="3.5" y="163.39999999999998" width="2.2" height="2.2" fill="#c6c6c6"/><rect x="10.0" y="163.39999999999998" width="2.2" height="2.2" fill="#c6c6c6"/><rect x="3.5" y="169.59999999999997" width="2.2" height="2.2" fill="#c6c6c6"/><rect x="10.0" y="169.59999999999997" width="2.2" height="2.2" fill="#c6c6c6"/><rect x="3.5" y="175.79999999999995" width="2.2" height="2.2" fill="#c6c6c6"/><rect x="10.0" y="175.79999999999995" width="2.2" height="2.2" fill="#c6c6c6"/><rect x="3.5" y="181.99999999999994" width="2.2" height="2.2" fill="#c6c6c6"/><rect x="10.0" y="181.99999999999994" width="2.2" height="2.2" fill="#c6c6c6"/><path d="M28,160 L52,152 L62,183 L37,191 Z" fill="#e4783a" stroke="#a54e1f" stroke-width="1.3"/><path d="M35,150 L58,148 L60,177 L38,178 Z" fill="#f2c230" stroke="#b89000" stroke-width="1.3"/><path d="M48,144 L75,150 L70,175 L43,170 Z" fill="#6b9ac9" stroke="#3f5f85" stroke-width="1.5"/><rect x="57" y="173" width="18" height="18" rx="3" fill="#5c9a5c"/><path d="M66,177 V187 M61,182 H71" stroke="#fff" stroke-width="3.5"/><path d="M94,160 L117,152 L140,160 L117,168 Z" fill="#333"/><circle cx="117" cy="159" r="15" fill="#8ab3de" stroke="#5a86b8" stroke-width="1"/><path d="M105,152 C108,146 114,146 116,150 C114,154 110,156 112,160 C110,163 106,160 105,156 Z M119,147 C124,146 129,149 130,153 C127,156 124,154 122,158 C120,161 118,156 120,153 Z M110,164 C114,162 120,164 124,166 L112,168 Z" fill="#2f4f7a"/><path d="M94,160 L117,168 L117,191 L94,182 Z" fill="#e0b000" stroke="#222" stroke-width="1.6" stroke-linejoin="round"/><path d="M117,168 L140,160 L140,184 L117,191 Z" fill="#fdf58a" stroke="#222" stroke-width="1.6" stroke-linejoin="round"/><path d="M94,160 L104,156 M140,160 L130,156" stroke="#222" stroke-width="1.6"/><rect x="123" y="173" width="18" height="18" rx="3" fill="#c9a000"/><line x1="132.0" y1="182.0" x2="132.0" y2="187.9" stroke="#fff" stroke-width="2.5" stroke-linecap="round"/><line x1="132.0" y1="182.0" x2="126.9" y2="185.0" stroke="#fff" stroke-width="2.5" stroke-linecap="round"/><line x1="132.0" y1="182.0" x2="126.9" y2="179.0" stroke="#fff" stroke-width="2.5" stroke-linecap="round"/><line x1="132.0" y1="182.0" x2="132.0" y2="176.1" stroke="#fff" stroke-width="2.5" stroke-linecap="round"/><line x1="132.0" y1="182.0" x2="137.1" y2="179.0" stroke="#fff" stroke-width="2.5" stroke-linecap="round"/><line x1="132.0" y1="182.0" x2="137.1" y2="185.0" stroke="#fff" stroke-width="2.5" stroke-linecap="round"/><circle cx="132.0" cy="182.0" r="3.2" fill="#fff"/><path d="M164,148 L177,177 L190,148 L204,148" fill="none" stroke="#26384d" stroke-width="2.6"/><circle cx="164" cy="148" r="3.8" fill="#fff" stroke="#26384d" stroke-width="2"/><circle cx="177" cy="177" r="3.8" fill="#fff" stroke="#26384d" stroke-width="2"/><circle cx="190" cy="148" r="3.8" fill="#fff" stroke="#26384d" stroke-width="2"/><circle cx="203" cy="148" r="3.8" fill="#fff" stroke="#26384d" stroke-width="2"/><rect x="189" y="173" width="18" height="18" rx="3" fill="#c9a000"/><line x1="198.0" y1="182.0" x2="198.0" y2="187.9" stroke="#fff" stroke-width="2.5" stroke-linecap="round"/><line x1="198.0" y1="182.0" x2="192.9" y2="185.0" stroke="#fff" stroke-width="2.5" stroke-linecap="round"/><line x1="198.0" y1="182.0" x2="192.9" y2="179.0" stroke="#fff" stroke-width="2.5" stroke-linecap="round"/><line x1="198.0" y1="182.0" x2="198.0" y2="176.1" stroke="#fff" stroke-width="2.5" stroke-linecap="round"/><line x1="198.0" y1="182.0" x2="203.1" y2="179.0" stroke="#fff" stroke-width="2.5" stroke-linecap="round"/><line x1="198.0" y1="182.0" x2="203.1" y2="185.0" stroke="#fff" stroke-width="2.5" stroke-linecap="round"/><circle cx="198.0" cy="182.0" r="3.2" fill="#fff"/><path d="M226,190 C235,160 250,150 270,143 C268,160 255,175 238,180 Z" fill="#6b9ac9" stroke="#26384d" stroke-width="1.8"/><path d="M232,182 L266,148" stroke="#dfe8f5" stroke-width="1.2"/><rect x="255" y="173" width="18" height="18" rx="3" fill="#c9a000"/><line x1="264.0" y1="182.0" x2="264.0" y2="187.9" stroke="#fff" stroke-width="2.5" stroke-linecap="round"/><line x1="264.0" y1="182.0" x2="258.9" y2="185.0" stroke="#fff" stroke-width="2.5" stroke-linecap="round"/><line x1="264.0" y1="182.0" x2="258.9" y2="179.0" stroke="#fff" stroke-width="2.5" stroke-linecap="round"/><line x1="264.0" y1="182.0" x2="264.0" y2="176.1" stroke="#fff" stroke-width="2.5" stroke-linecap="round"/><line x1="264.0" y1="182.0" x2="269.1" y2="179.0" stroke="#fff" stroke-width="2.5" stroke-linecap="round"/><line x1="264.0" y1="182.0" x2="269.1" y2="185.0" stroke="#fff" stroke-width="2.5" stroke-linecap="round"/><circle cx="264.0" cy="182.0" r="3.2" fill="#fff"/><rect x="297" y="156" width="37" height="21" rx="3" fill="#6b9ac9" stroke="#26384d" stroke-width="2"/><line x1="303" y1="148" x2="303" y2="156" stroke="#26384d" stroke-width="1.6"/><line x1="303" y1="177" x2="303" y2="183" stroke="#26384d" stroke-width="1.6"/><line x1="309" y1="148" x2="309" y2="156" stroke="#26384d" stroke-width="1.6"/><line x1="309" y1="177" x2="309" y2="183" stroke="#26384d" stroke-width="1.6"/><line x1="315" y1="148" x2="315" y2="156" stroke="#26384d" stroke-width="1.6"/><line x1="315" y1="177" x2="315" y2="183" stroke="#26384d" stroke-width="1.6"/><line x1="321" y1="148" x2="321" y2="156" stroke="#26384d" stroke-width="1.6"/><line x1="321" y1="177" x2="321" y2="183" stroke="#26384d" stroke-width="1.6"/><line x1="327" y1="148" x2="327" y2="156" stroke="#26384d" stroke-width="1.6"/><line x1="327" y1="177" x2="327" y2="183" stroke="#26384d" stroke-width="1.6"/><rect x="321" y="173" width="18" height="18" rx="3" fill="#c9a000"/><line x1="330.0" y1="182.0" x2="330.0" y2="187.9" stroke="#fff" stroke-width="2.5" stroke-linecap="round"/><line x1="330.0" y1="182.0" x2="324.9" y2="185.0" stroke="#fff" stroke-width="2.5" stroke-linecap="round"/><line x1="330.0" y1="182.0" x2="324.9" y2="179.0" stroke="#fff" stroke-width="2.5" stroke-linecap="round"/><line x1="330.0" y1="182.0" x2="330.0" y2="176.1" stroke="#fff" stroke-width="2.5" stroke-linecap="round"/><line x1="330.0" y1="182.0" x2="335.1" y2="179.0" stroke="#fff" stroke-width="2.5" stroke-linecap="round"/><line x1="330.0" y1="182.0" x2="335.1" y2="185.0" stroke="#fff" stroke-width="2.5" stroke-linecap="round"/><circle cx="330.0" cy="182.0" r="3.2" fill="#fff"/><rect x="360" y="146" width="43" height="42" fill="#6b9ac9" stroke="#26384d" stroke-width="2.2"/><path d="M360,170 H403 M383,146 V188 M360,146 L383,170 M383,146 L360,170 M403,146 L383,170 M360,179 H383 M371,170 V188" stroke="#26384d" stroke-width="2" fill="none"/><rect x="361" y="147" width="21" height="22" fill="#a9c6e8" opacity="0.6"/><rect x="387" y="173" width="18" height="18" rx="3" fill="#c9a000"/><line x1="396.0" y1="182.0" x2="396.0" y2="187.9" stroke="#fff" stroke-width="2.5" stroke-linecap="round"/><line x1="396.0" y1="182.0" x2="390.9" y2="185.0" stroke="#fff" stroke-width="2.5" stroke-linecap="round"/><line x1="396.0" y1="182.0" x2="390.9" y2="179.0" stroke="#fff" stroke-width="2.5" stroke-linecap="round"/><line x1="396.0" y1="182.0" x2="396.0" y2="176.1" stroke="#fff" stroke-width="2.5" stroke-linecap="round"/><line x1="396.0" y1="182.0" x2="401.1" y2="179.0" stroke="#fff" stroke-width="2.5" stroke-linecap="round"/><line x1="396.0" y1="182.0" x2="401.1" y2="185.0" stroke="#fff" stroke-width="2.5" stroke-linecap="round"/><circle cx="396.0" cy="182.0" r="3.2" fill="#fff"/><rect x="425" y="146" width="45" height="43" rx="3" fill="#c9d6e6" stroke="#3f5f85" stroke-width="1.8"/><path d="M429,148 L441,178 L455,148" fill="none" stroke="#3f5f85" stroke-width="2.4"/><circle cx="441" cy="178" r="3.5" fill="#fff" stroke="#3f5f85" stroke-width="2"/><circle cx="454" cy="148" r="3" fill="#fff" stroke="#3f5f85" stroke-width="1.5"/><rect x="453" y="173" width="18" height="18" rx="3" fill="#c9a000"/><line x1="462.0" y1="182.0" x2="462.0" y2="187.9" stroke="#fff" stroke-width="2.5" stroke-linecap="round"/><line x1="462.0" y1="182.0" x2="456.9" y2="185.0" stroke="#fff" stroke-width="2.5" stroke-linecap="round"/><line x1="462.0" y1="182.0" x2="456.9" y2="179.0" stroke="#fff" stroke-width="2.5" stroke-linecap="round"/><line x1="462.0" y1="182.0" x2="462.0" y2="176.1" stroke="#fff" stroke-width="2.5" stroke-linecap="round"/><line x1="462.0" y1="182.0" x2="467.1" y2="179.0" stroke="#fff" stroke-width="2.5" stroke-linecap="round"/><line x1="462.0" y1="182.0" x2="467.1" y2="185.0" stroke="#fff" stroke-width="2.5" stroke-linecap="round"/><circle cx="462.0" cy="182.0" r="3.2" fill="#fff"/><rect x="497.5" y="151" width="2.2" height="2.2" fill="#c6c6c6"/><rect x="504.0" y="151" width="2.2" height="2.2" fill="#c6c6c6"/><rect x="497.5" y="157.2" width="2.2" height="2.2" fill="#c6c6c6"/><rect x="504.0" y="157.2" width="2.2" height="2.2" fill="#c6c6c6"/><rect x="497.5" y="163.39999999999998" width="2.2" height="2.2" fill="#c6c6c6"/><rect x="504.0" y="163.39999999999998" width="2.2" height="2.2" fill="#c6c6c6"/><rect x="497.5" y="169.59999999999997" width="2.2" height="2.2" fill="#c6c6c6"/><rect x="504.0" y="169.59999999999997" width="2.2" height="2.2" fill="#c6c6c6"/><rect x="497.5" y="175.79999999999995" width="2.2" height="2.2" fill="#c6c6c6"/><rect x="504.0" y="175.79999999999995" width="2.2" height="2.2" fill="#c6c6c6"/><rect x="497.5" y="181.99999999999994" width="2.2" height="2.2" fill="#c6c6c6"/><rect x="504.0" y="181.99999999999994" width="2.2" height="2.2" fill="#c6c6c6"/><path d="M540,145 L552,150 L535,187 L527,188 L528,180 Z M552,145 L566,150 L548,187 L540,189 L541,180 Z" fill="#dbd7d4" stroke="#cfcbc8" stroke-width="1.2"/><path d="M561.5,185.0 L572.5,185.0 L567,192.5 Z" fill="#4a4a4a"/><path d="M614,144 L626,151 L607,184 L596,191 L597,178 Z" fill="#e8d236" stroke="#333" stroke-width="1.6"/><path d="M614,144 L626,151 L624,155 L612,148 Z" fill="#eee" stroke="#333" stroke-width="1.2"/><path d="M597,178 L607,184 L596,191 Z" fill="#888"/><rect x="656" y="146" width="40" height="39" rx="4" fill="#d9dadb" stroke="#cfd0d1" stroke-width="2"/><rect x="663" y="148" width="25" height="14" fill="#eee"/><rect x="665" y="172" width="19" height="13" fill="#ececec"/><path d="M690,160 L700,165 L688,189 L681,190 L682,182 Z" fill="#dbd7d4" stroke="#cfcbc8" stroke-width="1"/><path d="M727,183 L758,151" stroke="#dadada" stroke-width="3" stroke-dasharray="5 4"/><rect x="724" y="180" width="7" height="7" fill="none" stroke="#d0d0d0" stroke-width="1.6"/><rect x="756" y="147" width="7" height="7" fill="none" stroke="#d0d0d0" stroke-width="1.6"/><path d="M779.5,164.0 L794.5,164.0 L787,171.5 Z" fill="#4a4a4a"/><circle cx="831" cy="151" r="5" fill="#ececec" stroke="#d0d0d0" stroke-width="1.6"/><circle cx="848" cy="155" r="5" fill="#ececec" stroke="#d0d0d0" stroke-width="1.6"/><circle cx="817" cy="167" r="5" fill="#ececec" stroke="#d0d0d0" stroke-width="1.6"/><rect x="835" y="169" width="22" height="21" rx="3" fill="#cfccc5"/><circle cx="846" cy="179.5" r="4" fill="#fff"/><rect x="880" y="149" width="10" height="10" fill="none" stroke="#c8c8c8" stroke-width="1.5"/><path d="M890,155 H917 M885,159 L880,186 M895,168 L918,189 M916,165 L897,188" stroke="#cfcbc5" stroke-width="2.5"/><path d="M893,163 L906,162 L900,173 Z" fill="#cfcbc5"/><path d="M935.5,164.0 L950.5,164.0 L943,171.5 Z" fill="#4a4a4a"/><rect x="969" y="147" width="40" height="11" fill="#e2e0d8" stroke="#d2d0c5" stroke-width="1.5"/><rect x="969" y="161" width="40" height="11" fill="#e2e0d8" stroke="#d2d0c5" stroke-width="1.5"/><rect x="969" y="175" width="40" height="11" fill="#e2e0d8" stroke="#d2d0c5" stroke-width="1.5"/><path d="M999,145 L1011,151 L991,188 L981,190 L982,180 Z" fill="#dedad6" stroke="#ccc" stroke-width="1.2"/><rect x="1036" y="147" width="28" height="27" fill="#e5e2da" stroke="#d5d2c8" stroke-width="1.5"/><rect x="1040" y="152" width="31" height="4" rx="2" fill="#d8c5c5"/><path d="M1040,160 H1071 L1068,189 H1043 Z" fill="#eee5e5" stroke="#d6c5c5" stroke-width="2"/><path d="M1049,162 V187 M1056,162 V187 M1063,162 V187" stroke="#d6c5c5" stroke-width="1.6"/><path d="M1100,165 L1140,168 M1102,152 L1135,175" stroke="#d0d0d0" stroke-width="2.5"/><circle cx="1134" cy="162" r="5" fill="none" stroke="#cdb8b8" stroke-width="2.5"/><circle cx="1136" cy="178" r="5" fill="none" stroke="#cdb8b8" stroke-width="2.5"/><path d="M1186,147 L1198,147 L1203,152 L1203,169 L1186,169 Z" fill="#fff" stroke="#dedede" stroke-width="1.6" stroke-linejoin="miter"/><path d="M1198,147 L1198,152 L1203,152" fill="none" stroke="#dedede" stroke-width="1.6"/><path d="M1172,155 L1188,155 L1194,161 L1194,185 L1172,185 Z" fill="#fff" stroke="#c5c5c5" stroke-width="1.8" stroke-linejoin="miter"/><path d="M1188,155 L1188,161 L1194,161" fill="none" stroke="#c5c5c5" stroke-width="1.8"/><line x1="1175" y1="166" x2="1190" y2="166" stroke="#cfcfcf" stroke-width="1.4"/><line x1="1175" y1="170" x2="1190" y2="170" stroke="#cfcfcf" stroke-width="1.4"/><line x1="1175" y1="174" x2="1190" y2="174" stroke="#cfcfcf" stroke-width="1.4"/><line x1="1175" y1="178" x2="1190" y2="178" stroke="#cfcfcf" stroke-width="1.4"/><rect x="1238" y="147" width="31" height="38" fill="#eee" stroke="#cfcbc5" stroke-width="1.8"/><rect x="1245" y="145" width="17" height="7" fill="#e5e5e5" stroke="#cfcfcf" stroke-width="1.5"/><path d="M1242,153 L1258,153 L1264,159 L1264,183 L1242,183 Z" fill="#fff" stroke="#c5c5c5" stroke-width="1.6" stroke-linejoin="miter"/><path d="M1258,153 L1258,159 L1264,159" fill="none" stroke="#c5c5c5" stroke-width="1.6"/><path d="M1301,165 L1314,149 L1314,158 C1330,156 1338,165 1336,175 C1334,184 1325,186 1320,185 L1320,178 C1326,178 1328,172 1324,169 C1321,166 1316,168 1314,168 L1314,180 Z" fill="#ddd5d0"/><path d="M1403,165 L1390,149 L1390,158 C1374,156 1366,165 1368,175 C1370,184 1379,186 1384,185 L1384,178 C1378,178 1376,172 1380,169 C1383,166 1388,168 1390,168 L1390,180 Z" fill="#d8dcd8"/><rect x="1436" y="151" width="2.2" height="2.2" fill="#c6c6c6"/><rect x="1442.5" y="151" width="2.2" height="2.2" fill="#c6c6c6"/><rect x="1436" y="157.2" width="2.2" height="2.2" fill="#c6c6c6"/><rect x="1442.5" y="157.2" width="2.2" height="2.2" fill="#c6c6c6"/><rect x="1436" y="163.39999999999998" width="2.2" height="2.2" fill="#c6c6c6"/><rect x="1442.5" y="163.39999999999998" width="2.2" height="2.2" fill="#c6c6c6"/><rect x="1436" y="169.59999999999997" width="2.2" height="2.2" fill="#c6c6c6"/><rect x="1442.5" y="169.59999999999997" width="2.2" height="2.2" fill="#c6c6c6"/><rect x="1436" y="175.79999999999995" width="2.2" height="2.2" fill="#c6c6c6"/><rect x="1442.5" y="175.79999999999995" width="2.2" height="2.2" fill="#c6c6c6"/><rect x="1436" y="181.99999999999994" width="2.2" height="2.2" fill="#c6c6c6"/><rect x="1442.5" y="181.99999999999994" width="2.2" height="2.2" fill="#c6c6c6"/><path d="M1469,151.5 L1501,151.5 L1501,172.5 L1469,172.5 L1460,162.0 Z" fill="#fbe34a" stroke="#c9a000" stroke-width="2.2"/><text x="1485.0" y="167.88" font-size="17" font-weight="bold" fill="#222" text-anchor="middle" font-family="Liberation Sans">abc</text><circle cx="1543" cy="161" r="13.5" fill="#d41717" stroke="#222" stroke-width="1.4"/><path d="M1543,161 L1543,147.5 A13.5,13.5 0 0 0 1531,167 Z" fill="#1faa55"/><path d="M1543,161 L1531,167 A13.5,13.5 0 0 1 1531,154" fill="#1faa55"/><path d="M1543,161 L1531.5,154 A13.5,13.5 0 0 1 1555,154 Z" fill="#f5d000"/><rect x="1545" y="175" width="7" height="13" fill="#f5d000" stroke="#e0a000" stroke-width="1"/><rect x="1553" y="163" width="7" height="25" fill="#1faa55" stroke="#144" stroke-width="1.2"/><rect x="1561" y="178" width="8" height="10" fill="#b01010" stroke="#400" stroke-width="1"/><rect x="1589" y="148" width="2.2" height="37" fill="#cdcdcd"/><path d="M1615,151.5 L1646,151.5 L1646,172.5 L1615,172.5 L1606,162.0 Z" fill="#d7e6f9" stroke="#4a90e2" stroke-width="2.2"/><text x="1630.5" y="167.88" font-size="17" font-weight="bold" fill="#222" text-anchor="middle" font-family="Liberation Sans">ab</text><rect x="1636" y="161" width="4" height="13" rx="2" fill="#fff" stroke="#333" stroke-width="1"/><circle cx="1642.5" cy="178.5" r="9.5" fill="#a52020"/><circle cx="1640" cy="175" r="3" fill="#d56060"/><path d="M1681,151.5 L1713,151.5 L1713,172.5 L1681,172.5 L1672,162.0 Z" fill="#fde0e0" stroke="#e81010" stroke-width="2.2"/><text x="1697.0" y="167.88" font-size="17" font-weight="bold" fill="#e81010" text-anchor="middle" font-family="Liberation Sans">abc</text><rect x="1734.5" y="148" width="2.2" height="37" fill="#cdcdcd"/><path d="M1761,151.5 L1792,151.5 L1792,172.5 L1761,172.5 L1752,162.0 Z" fill="#e4e3dc" stroke="#d5d3c8" stroke-width="2.2"/><text x="1776.5" y="167.88" font-size="17" font-weight="bold" fill="#c5c5bf" text-anchor="middle" font-family="Liberation Sans">ab</text><circle cx="1788.5" cy="178.5" r="9.5" fill="#cdc6c6"/><path d="M1827,151.5 L1859,151.5 L1859,172.5 L1827,172.5 L1818,162.0 Z" fill="#e4e3dc" stroke="#d5d3c8" stroke-width="2.2"/><text x="1843.0" y="167.88" font-size="17" font-weight="bold" fill="#c5c5bf" text-anchor="middle" font-family="Liberation Sans">abc</text><ellipse cx="1848" cy="182" rx="14" ry="7" fill="none" stroke="#cfcfcf" stroke-width="1.5"/><circle cx="1848" cy="182" r="4" fill="#cfcfcf"/><path d="M1892,151 L1923,151 L1923,172 L1892,172 L1883,161.5 Z" fill="#e4e3dc" stroke="#d5d3c8" stroke-width="2.2"/><text x="1907.5" y="167.38" font-size="17" font-weight="bold" fill="#c5c5bf" text-anchor="middle" font-family="Liberation Sans">abc</text><rect x="1909" y="170" width="21" height="21" rx="3" fill="#cfd0d0"/><path d="M1912,177 H1920 V173 L1927,180.5 L1920,188 V184 H1912 Z" fill="#fff"/><path d="M1959,151 L1990,151 L1990,172 L1959,172 L1950,161.5 Z" fill="#e4e3dc" stroke="#d5d3c8" stroke-width="2.2"/><text x="1974.5" y="167.38" font-size="17" font-weight="bold" fill="#c5c5bf" text-anchor="middle" font-family="Liberation Sans">abc</text><rect x="1976" y="170" width="21" height="21" rx="3" fill="#cfd0d0"/><circle cx="1986.5" cy="180.5" r="5.5" fill="none" stroke="#fff" stroke-width="2.6"/><path d="M2025,151 L2056,151 L2056,172 L2025,172 L2016,161.5 Z" fill="#e4e3dc" stroke="#d5d3c8" stroke-width="2.2"/><text x="2040.5" y="167.38" font-size="17" font-weight="bold" fill="#c5c5bf" text-anchor="middle" font-family="Liberation Sans">abc</text><rect x="2042" y="170" width="21" height="21" rx="3" fill="#cfd0d0"/><path d="M2046,188 L2059,174" stroke="#fff" stroke-width="2.6"/><rect x="2089" y="151" width="2.2" height="2.2" fill="#c6c6c6"/><rect x="2095.5" y="151" width="2.2" height="2.2" fill="#c6c6c6"/><rect x="2089" y="157.2" width="2.2" height="2.2" fill="#c6c6c6"/><rect x="2095.5" y="157.2" width="2.2" height="2.2" fill="#c6c6c6"/><rect x="2089" y="163.39999999999998" width="2.2" height="2.2" fill="#c6c6c6"/><rect x="2095.5" y="163.39999999999998" width="2.2" height="2.2" fill="#c6c6c6"/><rect x="2089" y="169.59999999999997" width="2.2" height="2.2" fill="#c6c6c6"/><rect x="2095.5" y="169.59999999999997" width="2.2" height="2.2" fill="#c6c6c6"/><rect x="2089" y="175.79999999999995" width="2.2" height="2.2" fill="#c6c6c6"/><rect x="2095.5" y="175.79999999999995" width="2.2" height="2.2" fill="#c6c6c6"/><rect x="2089" y="181.99999999999994" width="2.2" height="2.2" fill="#c6c6c6"/><rect x="2095.5" y="181.99999999999994" width="2.2" height="2.2" fill="#c6c6c6"/><defs><radialGradient id="globeg" cx="50%" cy="45%" r="55%"><stop offset="0" stop-color="#ffffff"/><stop offset="0.55" stop-color="#b8b8b8"/><stop offset="1" stop-color="#3a3a3a"/></radialGradient><linearGradient id="globeb" x1="0" y1="0" x2="1" y2="0"><stop offset="0" stop-color="#2f6fc0"/><stop offset="0.5" stop-color="#a8d0ff"/><stop offset="1" stop-color="#2f6fc0"/></linearGradient></defs><circle cx="2137.5" cy="165.5" r="23.5" fill="url(#globeg)" stroke="#3a78c8" stroke-width="2.5"/><ellipse cx="2137.5" cy="165.5" rx="9.87" ry="22.5" fill="url(#globeb)" stroke="#3a78c8" stroke-width="1.2"/><path d="M2114.0,165.5 H2161.0 M2117.055,153.75 H2157.945 M2117.055,177.25 H2157.945 M2137.5,142.0 V189.0" stroke="#3a78c8" stroke-width="1.8"/><ellipse cx="2137.5" cy="165.5" rx="17.625" ry="22.5" fill="none" stroke="#3a78c8" stroke-width="1.2"/><rect x="2144" y="174" width="20" height="18" rx="2" fill="#4f8f4f"/><path d="M2154,177 V189 M2148,183 H2160" stroke="#fff" stroke-width="3.5"/><path d="M2157,187 L2166,187 L2161.5,193 Z" fill="#222"/><circle cx="2203" cy="165.5" r="23.5" fill="url(#globeg)" stroke="#3a78c8" stroke-width="2.5"/><ellipse cx="2203" cy="165.5" rx="9.87" ry="22.5" fill="url(#globeb)" stroke="#3a78c8" stroke-width="1.2"/><path d="M2179.5,165.5 H2226.5 M2182.555,153.75 H2223.445 M2182.555,177.25 H2223.445 M2203,142.0 V189.0" stroke="#3a78c8" stroke-width="1.8"/><ellipse cx="2203" cy="165.5" rx="17.625" ry="22.5" fill="none" stroke="#3a78c8" stroke-width="1.2"/><rect x="2210" y="174" width="19" height="18" rx="2" fill="#4f8f4f"/><circle cx="2218" cy="182" r="4.5" fill="none" stroke="#fff" stroke-width="2.2"/><line x1="2221" y1="185" x2="2225" y2="189" stroke="#fff" stroke-width="2.5"/><path d="M2251,161 L2257,167 L2251,173 M2260,161 L2266,167 L2260,173" fill="none" stroke="#333" stroke-width="2.6"/><rect x="2285" y="151" width="2.2" height="2.2" fill="#c6c6c6"/><rect x="2291.5" y="151" width="2.2" height="2.2" fill="#c6c6c6"/><rect x="2285" y="157.2" width="2.2" height="2.2" fill="#c6c6c6"/><rect x="2291.5" y="157.2" width="2.2" height="2.2" fill="#c6c6c6"/><rect x="2285" y="163.39999999999998" width="2.2" height="2.2" fill="#c6c6c6"/><rect x="2291.5" y="163.39999999999998" width="2.2" height="2.2" fill="#c6c6c6"/><rect x="2285" y="169.59999999999997" width="2.2" height="2.2" fill="#c6c6c6"/><rect x="2291.5" y="169.59999999999997" width="2.2" height="2.2" fill="#c6c6c6"/><rect x="2285" y="175.79999999999995" width="2.2" height="2.2" fill="#c6c6c6"/><rect x="2291.5" y="175.79999999999995" width="2.2" height="2.2" fill="#c6c6c6"/><rect x="2285" y="181.99999999999994" width="2.2" height="2.2" fill="#c6c6c6"/><rect x="2291.5" y="181.99999999999994" width="2.2" height="2.2" fill="#c6c6c6"/><path d="M2333,146 C2322,146 2322,151 2322,155 L2322,160 L2334,160 L2334,162 L2317,162 C2312,162 2312,170 2313,175 C2314,180 2317,181 2320,181 L2324,181 L2324,174 C2324,170 2327,167 2331,167 L2341,167 C2344,167 2346,165 2346,162 L2346,153 C2346,148 2341,146 2333,146 Z" fill="#3a73a8"/><path d="M2335,188 C2346,188 2346,183 2346,179 L2346,174 L2334,174 L2334,172 L2351,172 C2356,172 2356,164 2355,159 C2354,154 2351,153 2348,153 L2344,153 L2344,160 C2344,164 2341,167 2337,167 L2327,167 C2324,167 2322,169 2322,172 L2322,181 C2322,186 2327,188 2335,188 Z" fill="#f7cf3a"/><path d="M2342,178 L2354,183 L2342,188" fill="none" stroke="#333" stroke-width="2"/><path d="M2375,161 L2381,167 L2375,173 M2384,161 L2390,167 L2384,173" fill="none" stroke="#333" stroke-width="2.6"/><rect x="2409" y="151" width="2.2" height="2.2" fill="#c6c6c6"/><rect x="2415.5" y="151" width="2.2" height="2.2" fill="#c6c6c6"/><rect x="2409" y="157.2" width="2.2" height="2.2" fill="#c6c6c6"/><rect x="2415.5" y="157.2" width="2.2" height="2.2" fill="#c6c6c6"/><rect x="2409" y="163.39999999999998" width="2.2" height="2.2" fill="#c6c6c6"/><rect x="2415.5" y="163.39999999999998" width="2.2" height="2.2" fill="#c6c6c6"/><rect x="2409" y="169.59999999999997" width="2.2" height="2.2" fill="#c6c6c6"/><rect x="2415.5" y="169.59999999999997" width="2.2" height="2.2" fill="#c6c6c6"/><rect x="2409" y="175.79999999999995" width="2.2" height="2.2" fill="#c6c6c6"/><rect x="2415.5" y="175.79999999999995" width="2.2" height="2.2" fill="#c6c6c6"/><rect x="2409" y="181.99999999999994" width="2.2" height="2.2" fill="#c6c6c6"/><rect x="2415.5" y="181.99999999999994" width="2.2" height="2.2" fill="#c6c6c6"/><rect x="2437" y="146" width="40" height="41" fill="#6b9ac9" stroke="#1a2a3a" stroke-width="2"/><rect x="2438" y="147" width="9" height="39" fill="#2a3f55"/><text x="2462" y="178" font-size="29" font-weight="bold" fill="#fff" text-anchor="middle" font-family="Liberation Serif">?</text><rect x="2508" y="151" width="2.2" height="2.2" fill="#c6c6c6"/><rect x="2514.5" y="151" width="2.2" height="2.2" fill="#c6c6c6"/><rect x="2508" y="157.2" width="2.2" height="2.2" fill="#c6c6c6"/><rect x="2514.5" y="157.2" width="2.2" height="2.2" fill="#c6c6c6"/><rect x="2508" y="163.39999999999998" width="2.2" height="2.2" fill="#c6c6c6"/><rect x="2514.5" y="163.39999999999998" width="2.2" height="2.2" fill="#c6c6c6"/><rect x="2508" y="169.59999999999997" width="2.2" height="2.2" fill="#c6c6c6"/><rect x="2514.5" y="169.59999999999997" width="2.2" height="2.2" fill="#c6c6c6"/><rect x="2508" y="175.79999999999995" width="2.2" height="2.2" fill="#c6c6c6"/><rect x="2514.5" y="175.79999999999995" width="2.2" height="2.2" fill="#c6c6c6"/><rect x="2508" y="181.99999999999994" width="2.2" height="2.2" fill="#c6c6c6"/><rect x="2514.5" y="181.99999999999994" width="2.2" height="2.2" fill="#c6c6c6"/><rect x="3.5" y="229" width="2.2" height="2.2" fill="#c6c6c6"/><rect x="10.0" y="229" width="2.2" height="2.2" fill="#c6c6c6"/><rect x="3.5" y="235.2" width="2.2" height="2.2" fill="#c6c6c6"/><rect x="10.0" y="235.2" width="2.2" height="2.2" fill="#c6c6c6"/><rect x="3.5" y="241.39999999999998" width="2.2" height="2.2" fill="#c6c6c6"/><rect x="10.0" y="241.39999999999998" width="2.2" height="2.2" fill="#c6c6c6"/><rect x="3.5" y="247.59999999999997" width="2.2" height="2.2" fill="#c6c6c6"/><rect x="10.0" y="247.59999999999997" width="2.2" height="2.2" fill="#c6c6c6"/><rect x="3.5" y="253.79999999999995" width="2.2" height="2.2" fill="#c6c6c6"/><rect x="10.0" y="253.79999999999995" width="2.2" height="2.2" fill="#c6c6c6"/><rect x="3.5" y="259.99999999999994" width="2.2" height="2.2" fill="#c6c6c6"/><rect x="10.0" y="259.99999999999994" width="2.2" height="2.2" fill="#c6c6c6"/><defs><linearGradient id="gg" x1="0" y1="0" x2="1" y2="1"><stop offset="0" stop-color="#6aa84f"/><stop offset="1" stop-color="#9ed67a"/></linearGradient></defs><rect x="27" y="221" width="48" height="48" fill="url(#gg)"/><circle cx="55" cy="237" r="11" fill="none" stroke="#fff" stroke-width="4"/><line x1="47" y1="245" x2="34" y2="261" stroke="#fff" stroke-width="5" stroke-linecap="round"/><path d="M93,221 H141 V269 H93 Z" fill="#fdd24a"/><rect x="93" y="221" width="6" height="44" fill="#c86a90"/><rect x="93" y="221" width="6" height="12" fill="#7a0a3a"/><path d="M95,224 L108,226 L104,232 L95,232 Z" fill="#3cc050"/><path d="M100,229 L109,226 L107,232 Z" fill="#20a020"/><rect x="103" y="240" width="6" height="10" fill="#2a7a8a" transform="rotate(-8 106 245)"/><rect x="128" y="236" width="13" height="33" fill="#8ab0f0"/><path d="M116,221 C114,232 122,240 128,248 C134,256 136,262 138,269" fill="none" stroke="#3a78e0" stroke-width="4"/><path d="M93,266 C99,259 108,260 114,266 M105,269 C110,264 118,263 124,269" fill="none" stroke="#3a78e0" stroke-width="4"/><path d="M112,254 L96,262 L93,266" fill="none" stroke="#555" stroke-width="1.6"/><circle cx="99" cy="260" r="1.8" fill="#fff" stroke="#555" stroke-width="1"/><line x1="139" y1="224" x2="117" y2="249" stroke="#8b4a10" stroke-width="7" stroke-linecap="round"/><path d="M115,246 L120,251 L111,256 Z" fill="#e8b070"/><circle cx="112" cy="255" r="1.6" fill="#333"/><rect x="167" y="229" width="2.2" height="2.2" fill="#c6c6c6"/><rect x="173.5" y="229" width="2.2" height="2.2" fill="#c6c6c6"/><rect x="167" y="235.2" width="2.2" height="2.2" fill="#c6c6c6"/><rect x="173.5" y="235.2" width="2.2" height="2.2" fill="#c6c6c6"/><rect x="167" y="241.39999999999998" width="2.2" height="2.2" fill="#c6c6c6"/><rect x="173.5" y="241.39999999999998" width="2.2" height="2.2" fill="#c6c6c6"/><rect x="167" y="247.59999999999997" width="2.2" height="2.2" fill="#c6c6c6"/><rect x="173.5" y="247.59999999999997" width="2.2" height="2.2" fill="#c6c6c6"/><rect x="167" y="253.79999999999995" width="2.2" height="2.2" fill="#c6c6c6"/><rect x="173.5" y="253.79999999999995" width="2.2" height="2.2" fill="#c6c6c6"/><rect x="167" y="259.99999999999994" width="2.2" height="2.2" fill="#c6c6c6"/><rect x="173.5" y="259.99999999999994" width="2.2" height="2.2" fill="#c6c6c6"/><circle cx="215" cy="244.7" r="24.2" fill="#0b5272"/><rect x="202" y="228" width="26" height="28" rx="5" fill="#fff"/><rect x="205" y="235" width="20" height="11" rx="2" fill="#0b5272"/><rect x="208" y="230" width="14" height="2.5" rx="1" fill="#0b5272"/><circle cx="208" cy="251" r="2" fill="#0b5272"/><circle cx="222" cy="251" r="2" fill="#0b5272"/><rect x="204" y="255" width="5" height="5" fill="#fff"/><rect x="221" y="255" width="5" height="5" fill="#fff"/><rect x="265.5" y="229" width="2.2" height="2.2" fill="#c6c6c6"/><rect x="272.0" y="229" width="2.2" height="2.2" fill="#c6c6c6"/><rect x="265.5" y="235.2" width="2.2" height="2.2" fill="#c6c6c6"/><rect x="272.0" y="235.2" width="2.2" height="2.2" fill="#c6c6c6"/><rect x="265.5" y="241.39999999999998" width="2.2" height="2.2" fill="#c6c6c6"/><rect x="272.0" y="241.39999999999998" width="2.2" height="2.2" fill="#c6c6c6"/><rect x="265.5" y="247.59999999999997" width="2.2" height="2.2" fill="#c6c6c6"/><rect x="272.0" y="247.59999999999997" width="2.2" height="2.2" fill="#c6c6c6"/><rect x="265.5" y="253.79999999999995" width="2.2" height="2.2" fill="#c6c6c6"/><rect x="272.0" y="253.79999999999995" width="2.2" height="2.2" fill="#c6c6c6"/><rect x="265.5" y="259.99999999999994" width="2.2" height="2.2" fill="#c6c6c6"/><rect x="272.0" y="259.99999999999994" width="2.2" height="2.2" fill="#c6c6c6"/><path d="M292,226 H302 M296,226 V266 M300,236 H334 M305,262 H322 M315,226 V262 M330,226 V255" stroke="#a6b6e8" stroke-width="1" fill="none"/><path d="M296,246 H334" stroke="#ee8888" stroke-width="1"/><path d="M318,226 V256 H330" stroke="#8ed88e" stroke-width="1" fill="none"/><text x="313" y="253" font-size="21" font-weight="bold" fill="#3c4450" text-anchor="middle" font-family="Liberation Sans" letter-spacing="-0.5">GTFS</text><rect x="364" y="229" width="2.2" height="2.2" fill="#c6c6c6"/><rect x="370.5" y="229" width="2.2" height="2.2" fill="#c6c6c6"/><rect x="364" y="235.2" width="2.2" height="2.2" fill="#c6c6c6"/><rect x="370.5" y="235.2" width="2.2" height="2.2" fill="#c6c6c6"/><rect x="364" y="241.39999999999998" width="2.2" height="2.2" fill="#c6c6c6"/><rect x="370.5" y="241.39999999999998" width="2.2" height="2.2" fill="#c6c6c6"/><rect x="364" y="247.59999999999997" width="2.2" height="2.2" fill="#c6c6c6"/><rect x="370.5" y="247.59999999999997" width="2.2" height="2.2" fill="#c6c6c6"/><rect x="364" y="253.79999999999995" width="2.2" height="2.2" fill="#c6c6c6"/><rect x="370.5" y="253.79999999999995" width="2.2" height="2.2" fill="#c6c6c6"/><rect x="364" y="259.99999999999994" width="2.2" height="2.2" fill="#c6c6c6"/><rect x="370.5" y="259.99999999999994" width="2.2" height="2.2" fill="#c6c6c6"/><rect x="389.5" y="223.5" width="44" height="44" fill="#e3e3e3" stroke="#333" stroke-width="1.6" stroke-dasharray="3.5 2.5"/><rect x="391" y="226" width="27" height="27" fill="#fde74c" stroke="#c9a000" stroke-width="1.6"/><path d="M407,237 L407,264 L413,258 L419,268 L424,265 L418,255 L426,255 Z" fill="#fff" stroke="#111" stroke-width="1.8" stroke-linejoin="round"/><path d="M447.5,241.5 L462.5,241.5 L455,249 Z" fill="#4a4a4a"/><rect x="490" y="238" width="31" height="27" fill="#fde74c" stroke="#c9a000" stroke-width="1.8"/><rect x="484" y="227" width="29" height="25" fill="#e0e0e0" stroke="#888" stroke-width="2"/><rect x="488" y="231" width="21" height="6" fill="#fff" stroke="#888" stroke-width="1.2"/><rect x="488" y="241" width="21" height="6" fill="#fff" stroke="#888" stroke-width="1.2"/><path d="M537.5,241.5 L552.5,241.5 L545,249 Z" fill="#4a4a4a"/><rect x="572" y="225" width="27" height="27" fill="#fde74c" stroke="#c9a000" stroke-width="1.8"/><rect x="580" y="233" width="27" height="27" fill="#fde74c" stroke="#c9a000" stroke-width="1.8"/><rect x="595" y="246" width="21" height="21" rx="3" fill="#d42020"/><circle cx="605.5" cy="256.5" r="6" fill="none" stroke="#fff" stroke-width="2"/><line x1="601" y1="261" x2="610" y2="252" stroke="#fff" stroke-width="2"/><path d="M627.5,241.5 L642.5,241.5 L635,249 Z" fill="#4a4a4a"/><rect x="662" y="226" width="27" height="26" fill="#fde74c" stroke="#c9a000" stroke-width="1.8"/><path d="M696,263 C690,254 688,251 688,247 C688,243 692,240 696,240 C700,240 704,243 704,247 C704,251 702,254 696,263 Z" fill="#6b8fb0"/><circle cx="696" cy="247" r="2.5" fill="#fff"/><rect x="1972" y="229" width="2.2" height="2.2" fill="#c6c6c6"/><rect x="1978.5" y="229" width="2.2" height="2.2" fill="#c6c6c6"/><rect x="1972" y="235.2" width="2.2" height="2.2" fill="#c6c6c6"/><rect x="1978.5" y="235.2" width="2.2" height="2.2" fill="#c6c6c6"/><rect x="1972" y="241.39999999999998" width="2.2" height="2.2" fill="#c6c6c6"/><rect x="1978.5" y="241.39999999999998" width="2.2" height="2.2" fill="#c6c6c6"/><rect x="1972" y="247.59999999999997" width="2.2" height="2.2" fill="#c6c6c6"/><rect x="1978.5" y="247.59999999999997" width="2.2" height="2.2" fill="#c6c6c6"/><rect x="1972" y="253.79999999999995" width="2.2" height="2.2" fill="#c6c6c6"/><rect x="1978.5" y="253.79999999999995" width="2.2" height="2.2" fill="#c6c6c6"/><rect x="1972" y="259.99999999999994" width="2.2" height="2.2" fill="#c6c6c6"/><rect x="1978.5" y="259.99999999999994" width="2.2" height="2.2" fill="#c6c6c6"/><rect x="2006" y="229" width="2.2" height="2.2" fill="#c6c6c6"/><rect x="2012.5" y="229" width="2.2" height="2.2" fill="#c6c6c6"/><rect x="2006" y="235.2" width="2.2" height="2.2" fill="#c6c6c6"/><rect x="2012.5" y="235.2" width="2.2" height="2.2" fill="#c6c6c6"/><rect x="2006" y="241.39999999999998" width="2.2" height="2.2" fill="#c6c6c6"/><rect x="2012.5" y="241.39999999999998" width="2.2" height="2.2" fill="#c6c6c6"/><rect x="2006" y="247.59999999999997" width="2.2" height="2.2" fill="#c6c6c6"/><rect x="2012.5" y="247.59999999999997" width="2.2" height="2.2" fill="#c6c6c6"/><rect x="2006" y="253.79999999999995" width="2.2" height="2.2" fill="#c6c6c6"/><rect x="2012.5" y="253.79999999999995" width="2.2" height="2.2" fill="#c6c6c6"/><rect x="2006" y="259.99999999999994" width="2.2" height="2.2" fill="#c6c6c6"/><rect x="2012.5" y="259.99999999999994" width="2.2" height="2.2" fill="#c6c6c6"/><ellipse cx="2050" cy="242" rx="12" ry="11" fill="#f5ee1a" stroke="#7a7a30" stroke-width="1"/><rect x="2040" y="249" width="6" height="9" fill="#f5ee1a" stroke="#7a7a30" stroke-width="0.8"/><rect x="2052" y="249" width="6" height="8" fill="#f5ee1a" stroke="#7a7a30" stroke-width="0.8"/><circle cx="2063" cy="233" r="9" fill="#f5ee1a" stroke="#7a7a30" stroke-width="1"/><path d="M2070,236 C2074,240 2073,246 2071,248" fill="none" stroke="#f5ee1a" stroke-width="4"/><ellipse cx="2057" cy="238" rx="4.5" ry="7" fill="#e8e020" stroke="#8a8a40" stroke-width="0.8"/><circle cx="2065" cy="231" r="1.6" fill="#111"/><line x1="2038" y1="236" x2="2035" y2="240" stroke="#7a7a30" stroke-width="1.5"/><circle cx="2048" cy="260" r="7.5" fill="#3a8ad8"/><path d="M2044,257 L2050,262" stroke="#6c6" stroke-width="3"/><path d="M2065,268 L2075,258 L2069,258 L2069,247 L2061,247 L2061,258 L2055,258 Z" fill="#1fbf3a"/><ellipse cx="2116" cy="242" rx="12" ry="11" fill="#f5ee1a" stroke="#7a7a30" stroke-width="1"/><rect x="2106" y="249" width="6" height="9" fill="#f5ee1a" stroke="#7a7a30" stroke-width="0.8"/><rect x="2118" y="249" width="6" height="8" fill="#f5ee1a" stroke="#7a7a30" stroke-width="0.8"/><circle cx="2129" cy="233" r="9" fill="#f5ee1a" stroke="#7a7a30" stroke-width="1"/><path d="M2136,236 C2140,240 2139,246 2137,248" fill="none" stroke="#f5ee1a" stroke-width="4"/><ellipse cx="2123" cy="238" rx="4.5" ry="7" fill="#e8e020" stroke="#8a8a40" stroke-width="0.8"/><circle cx="2131" cy="231" r="1.6" fill="#111"/><line x1="2104" y1="236" x2="2101" y2="240" stroke="#7a7a30" stroke-width="1.5"/><circle cx="2114" cy="260" r="7.5" fill="#3a8ad8"/><path d="M2110,257 L2116,262" stroke="#6c6" stroke-width="3"/><path d="M2132,247 L2142,257 L2136,257 L2136,268 L2128,268 L2128,257 L2122,257 Z" fill="#1fbf3a"/><path d="M2168,222 L2194,222 L2204,232 L2204,268 L2168,268 Z" fill="#fff" stroke="#111" stroke-width="2.2"/><line x1="2168" y1="254" x2="2204" y2="254" stroke="#111" stroke-width="1.6"/><text x="2172" y="246" font-size="18" font-weight="bold" fill="#111" font-family="Liberation Mono">{:}</text><text x="2186" y="266" font-size="11" font-weight="bold" fill="#111" text-anchor="middle" font-family="Liberation Sans">JSON</text><path d="M2180,246 L2188,256 L2209,229" fill="none" stroke="#22c040" stroke-width="3.5"/></svg></body></html>
